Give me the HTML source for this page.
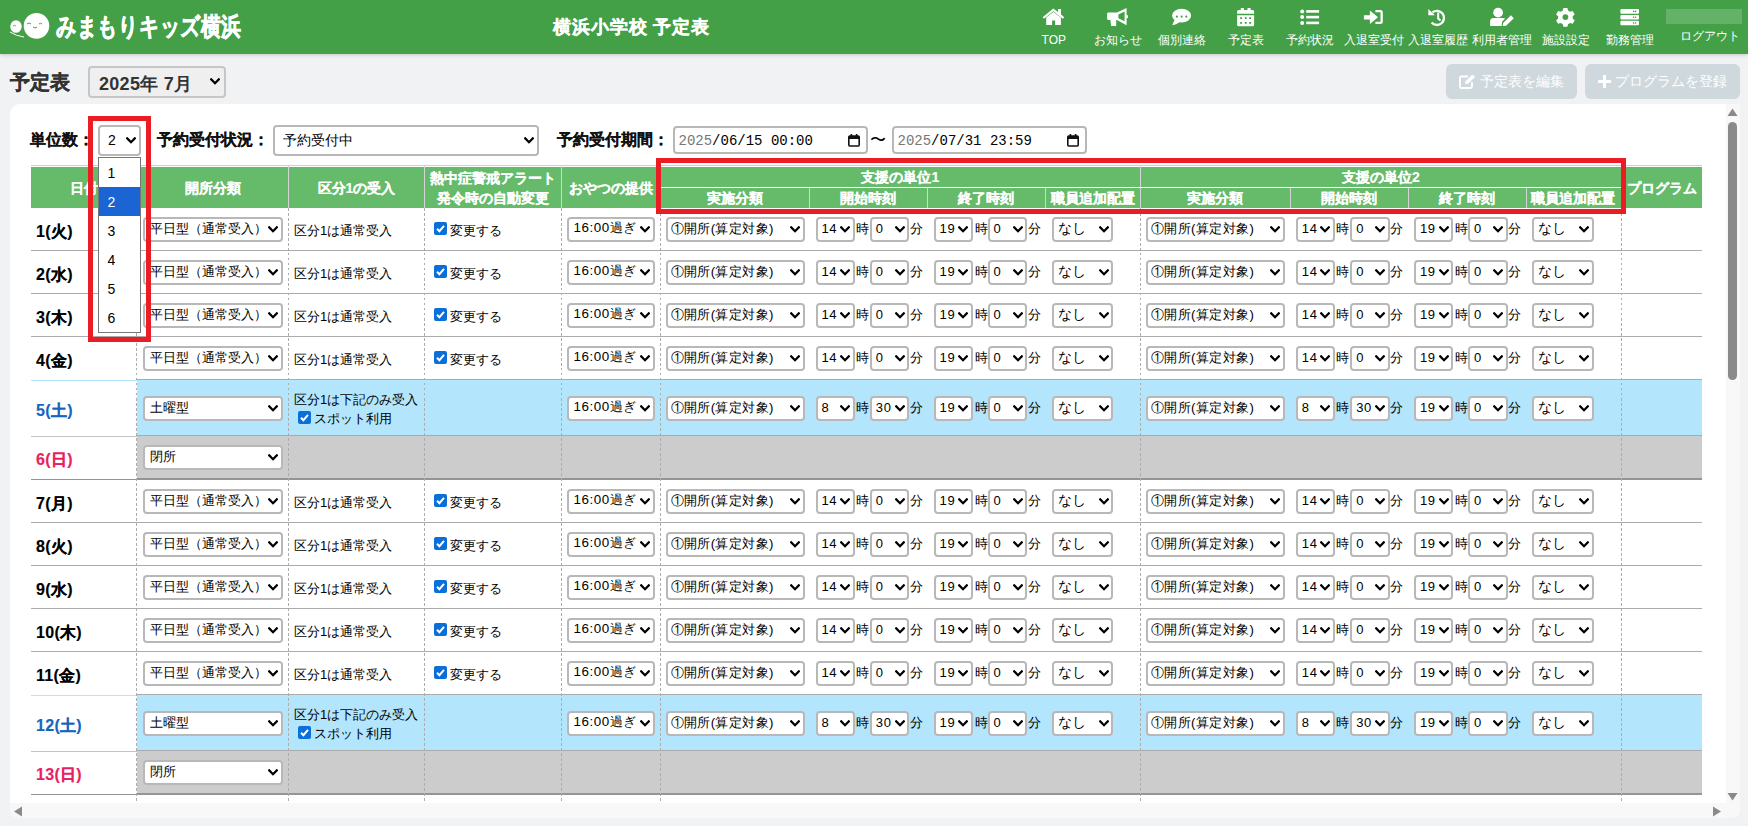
<!DOCTYPE html><html lang="ja"><head><meta charset="utf-8"><title>予定表</title><style>
html,body{margin:0;padding:0;}
body{width:1748px;height:826px;overflow:hidden;position:relative;background:#f1f2f4;font-family:'Liberation Sans', sans-serif;}
div,span,svg{position:absolute;box-sizing:content-box;}

</style></head><body>
<div style="left:0px;top:0px;width:1748px;height:54px;background:#43a047;box-shadow:0 1px 4px rgba(0,0,0,.18);"></div>
<svg style="left:8px;top:11px" width="44" height="30" viewBox="0 0 44 30"><ellipse cx="8" cy="15.5" rx="5.7" ry="6.3" fill="#fff"/><path d="M2 21 Q8 25 16 26" stroke="#fff" stroke-width="1" fill="none"/><ellipse cx="28.5" cy="14.8" rx="12.8" ry="12.9" fill="#fff"/><path d="M19 13 q2 -2 4 0 M25 16 q2 2 4 0 M31 13 q1.5 -1.5 3 0" stroke="#43a047" stroke-width="1" fill="none"/><path d="M5 15 q1.5 -1.5 3 0" stroke="#43a047" stroke-width="0.8" fill="none"/></svg>
<div style="left:55.5px;top:10px;font-size:25px;line-height:32px;color:#fff;font-weight:bold;white-space:nowrap;transform:scaleX(0.797);transform-origin:0 0;-webkit-text-stroke:0.7px #fff;">みまもりキッズ横浜</div>
<div style="left:553px;top:15px;font-size:18px;line-height:24px;color:#fff;font-weight:bold;white-space:nowrap;-webkit-text-stroke:0.3px #fff;letter-spacing:0.9px;">横浜小学校 予定表</div>
<div style="left:1013.8px;top:31.5px;width:80px;text-align:center;font-size:12px;line-height:16px;color:#fff;font-weight:normal;white-space:nowrap;">TOP</div>
<div style="left:1077.8px;top:31.5px;width:80px;text-align:center;font-size:12px;line-height:16px;color:#fff;font-weight:normal;white-space:nowrap;">お知らせ</div>
<div style="left:1141.7px;top:31.5px;width:80px;text-align:center;font-size:12px;line-height:16px;color:#fff;font-weight:normal;white-space:nowrap;">個別連絡</div>
<div style="left:1205.7px;top:31.5px;width:80px;text-align:center;font-size:12px;line-height:16px;color:#fff;font-weight:normal;white-space:nowrap;">予定表</div>
<div style="left:1269.7px;top:31.5px;width:80px;text-align:center;font-size:12px;line-height:16px;color:#fff;font-weight:normal;white-space:nowrap;">予約状況</div>
<div style="left:1333.7px;top:31.5px;width:80px;text-align:center;font-size:12px;line-height:16px;color:#fff;font-weight:normal;white-space:nowrap;">入退室受付</div>
<div style="left:1397.6px;top:31.5px;width:80px;text-align:center;font-size:12px;line-height:16px;color:#fff;font-weight:normal;white-space:nowrap;">入退室履歴</div>
<div style="left:1461.6px;top:31.5px;width:80px;text-align:center;font-size:12px;line-height:16px;color:#fff;font-weight:normal;white-space:nowrap;">利用者管理</div>
<div style="left:1525.6px;top:31.5px;width:80px;text-align:center;font-size:12px;line-height:16px;color:#fff;font-weight:normal;white-space:nowrap;">施設設定</div>
<div style="left:1589.5px;top:31.5px;width:80px;text-align:center;font-size:12px;line-height:16px;color:#fff;font-weight:normal;white-space:nowrap;">勤務管理</div>
<svg style="left:0;top:0" width="1748" height="54" viewBox="0 0 1748 54"><path d="M1053.3 8.6 L1042.6 17.2 L1044 18.8 L1053.3 11.3 L1062.8 18.8 L1064.3 17.2 L1061 14.5 V8.9 H1058 V12 Z" fill="#fff"/><path d="M1046.2 17.6 L1053.3 12 L1060.9 17.6 V25 H1055.1 V20.6 H1052.1 V25 H1046.2 Z" fill="#fff"/><path d="M1108.3 12.6 H1116.9 L1126.6 8 V25.2 L1116.9 20 H1116.2 L1116.2 26 H1111.1 L1110.4 20 H1108.3 Q1107.1 20 1107.1 18.8 V13.8 Q1107.1 12.6 1108.3 12.6 Z M1118.4 14.4 V18.3 L1124.6 21.3 V11.4 Z" fill="#fff" fill-rule="evenodd"/><rect x="1126" y="14.9" width="2" height="3.4" rx="1" fill="#fff"/><ellipse cx="1181.6" cy="15.7" rx="9.5" ry="6.9" fill="#fff"/><path d="M1174.5 20 L1172.2 25.3 Q1176.5 24.6 1179.5 22.3 Z" fill="#fff"/><circle cx="1176.9" cy="16.6" r="1.1" fill="#43a047"/><circle cx="1181.6" cy="16.6" r="1.1" fill="#43a047"/><circle cx="1186.3" cy="16.6" r="1.1" fill="#43a047"/><path d="M1238.6 10 H1252.6 Q1254.1 10 1254.1 11.5 V13.7 H1237.1 V11.5 Q1237.1 10 1238.6 10 Z" fill="#fff"/><path d="M1237.1 15.2 H1254.1 V24.8 Q1254.1 26.3 1252.6 26.3 H1238.6 Q1237.1 26.3 1237.1 24.8 Z" fill="#fff"/><rect x="1240.8" y="8" width="3.1" height="3" fill="#fff"/><rect x="1247.5" y="8" width="3.1" height="3" fill="#fff"/><g fill="#43a047"><rect x="1240.2" y="17.2" width="1.8" height="1.8"/><rect x="1244.8" y="17.2" width="1.8" height="1.8"/><rect x="1249.3" y="17.2" width="1.8" height="1.8"/><rect x="1240.2" y="22" width="1.8" height="1.8"/><rect x="1244.8" y="22" width="1.8" height="1.8"/><rect x="1249.3" y="22" width="1.8" height="1.8"/></g><circle cx="1302.2" cy="11.4" r="2" fill="#fff"/><circle cx="1302.2" cy="17.1" r="2" fill="#fff"/><circle cx="1302.2" cy="22.9" r="2" fill="#fff"/><rect x="1306.2" y="10.1" width="12.9" height="2.6" fill="#fff"/><rect x="1306.2" y="15.8" width="12.9" height="2.6" fill="#fff"/><rect x="1306.2" y="21.6" width="12.9" height="2.6" fill="#fff"/><path d="M1363.9 15.2 H1369.9 V10.6 L1378 17.3 L1369.9 24 V19.6 H1363.9 Z" fill="#fff"/><path d="M1375.4 11.15 H1380.5 Q1381.65 11.15 1381.65 12.3 V21.7 Q1381.65 22.85 1380.5 22.85 H1375.4" stroke="#fff" stroke-width="2.3" fill="none"/><path d="M1432.4 12.4 A7.1 7.1 0 1 1 1431.6 22.6" stroke="#fff" stroke-width="2.3" fill="none"/><path d="M1428.3 8.9 V15.2 H1434.9 Z" fill="#fff"/><path d="M1438.2 12.6 V18.6 L1440.5 20.6" stroke="#fff" stroke-width="2" fill="none"/><circle cx="1498.1" cy="12.6" r="4.9" fill="#fff"/><path d="M1493.6 17.9 H1502.6 Q1504.2 17.9 1505.2 18.5 L1502.2 21.5 L1501.6 26 H1490.1 V21.4 Q1490.1 17.9 1493.6 17.9 Z" fill="#fff"/><path d="M1502.6 26 L1503.2 22.9 L1510.9 15.3 L1513.8 18.2 L1506.1 25.8 Z" fill="#fff"/><path d="M1563.4 8 H1567.4 L1568 10.6 L1570.1 11.8 L1572.7 11 L1574.7 14.4 L1572.7 16.2 V18.6 L1574.7 20.4 L1572.7 23.8 L1570.1 23 L1568 24.2 L1567.4 26.8 H1563.4 L1562.8 24.2 L1560.7 23 L1558.1 23.8 L1556.1 20.4 L1558.1 18.6 V16.2 L1556.1 14.4 L1558.1 11 L1560.7 11.8 L1562.8 10.6 Z" fill="#fff"/><circle cx="1565.4" cy="17.1" r="2.9" fill="#43a047"/><rect x="1620.4" y="9.1" width="18.6" height="4.6" rx="1" fill="#fff"/><rect x="1620.4" y="15" width="18.6" height="4.4" rx="1" fill="#fff"/><rect x="1620.4" y="20.8" width="18.6" height="4.5" rx="1" fill="#fff"/><g fill="#43a047"><circle cx="1633.6" cy="11.4" r="0.8"/><circle cx="1635.6" cy="11.4" r="0.8"/><circle cx="1633.6" cy="17.2" r="0.8"/><circle cx="1635.6" cy="17.2" r="0.8"/><circle cx="1633.6" cy="23" r="0.8"/><circle cx="1635.6" cy="23" r="0.8"/></g></svg>
<div style="left:1666px;top:9px;width:76px;height:14.5px;background:rgba(255,255,255,0.18);"></div>
<div style="left:1680px;top:28px;font-size:12px;line-height:16px;color:#fff;font-weight:normal;white-space:nowrap;">ログアウト</div>
<div style="left:10px;top:69px;font-size:20px;line-height:26px;color:#333;font-weight:bold;white-space:nowrap;-webkit-text-stroke:0.3px #333;">予定表</div>
<div style="left:88px;top:66px;width:134px;height:27.5px;border:2px solid #c6c6c6;border-radius:4px;background:#efefef;"><div style="left:9px;top:3px;font-size:18px;line-height:27.5px;color:#333;font-weight:bold;white-space:nowrap;letter-spacing:0.3px;">2025年 7月</div><svg width="10" height="7" viewBox="0 0 10 7" style="position:absolute;right:4px;top:10.25px"><path d="M1.2 1.3 L5 5.2 L8.8 1.3" fill="none" stroke="#000" stroke-width="2.2" stroke-linecap="square"/></svg></div>
<div style="left:1446px;top:64px;width:131px;height:35px;background:#cfd8dc;border-radius:6px;"></div>
<div style="left:1585px;top:64px;width:155px;height:35px;background:#cfd8dc;border-radius:6px;"></div>
<svg style="left:1459px;top:73.5px" width="17" height="15" viewBox="0 0 17 15"><path d="M9 2.5 H2.5 Q1 2.5 1 4 V13 Q1 14 2.5 14 H11.5 Q13 14 13 12.5 V8" stroke="#fff" stroke-width="1.8" fill="none"/><path d="M6 10 L6.5 7.3 L13.5 0.5 L16 3 L9 9.8 Z" fill="#fff"/></svg>
<div style="left:1480px;top:72px;font-size:14px;line-height:18px;color:#fff;font-weight:normal;white-space:nowrap;">予定表を編集</div>
<svg style="left:1597.5px;top:74.5px" width="13" height="13" viewBox="0 0 13 13"><rect x="5" y="0" width="3" height="13" fill="#fff"/><rect x="0" y="5" width="13" height="3" fill="#fff"/></svg>
<div style="left:1615px;top:72px;font-size:14px;line-height:18px;color:#fff;font-weight:normal;white-space:nowrap;">プログラムを登録</div>
<div style="left:10px;top:104px;width:1730px;height:714px;background:#fff;border-radius:10px;overflow:hidden;"></div>
<div style="left:30px;top:130px;font-size:16px;line-height:20px;color:#111;font-weight:bold;white-space:nowrap;-webkit-text-stroke:0.15px #111;">単位数：</div>
<div style="left:98px;top:124.5px;width:39px;height:27.5px;border:2px solid #b8b8b8;border-radius:4px;background:#fff;"><div style="left:8px;top:0px;font-size:14px;line-height:27.5px;color:#000;font-weight:normal;white-space:nowrap;letter-spacing:0px;">2</div><svg width="10" height="7" viewBox="0 0 10 7" style="position:absolute;right:2.8px;top:10.25px"><path d="M1.2 1.3 L5 5.2 L8.8 1.3" fill="none" stroke="#000" stroke-width="2.2" stroke-linecap="square"/></svg></div>
<div style="left:157px;top:130px;font-size:16px;line-height:20px;color:#111;font-weight:bold;white-space:nowrap;-webkit-text-stroke:0.15px #111;">予約受付状況：</div>
<div style="left:272.5px;top:124.5px;width:262.5px;height:27.5px;border:2px solid #b8b8b8;border-radius:4px;background:#fff;"><div style="left:8px;top:0px;font-size:14px;line-height:27.5px;color:#000;font-weight:normal;white-space:nowrap;letter-spacing:0px;">予約受付中</div><svg width="10" height="7" viewBox="0 0 10 7" style="position:absolute;right:2.8px;top:10.25px"><path d="M1.2 1.3 L5 5.2 L8.8 1.3" fill="none" stroke="#000" stroke-width="2.2" stroke-linecap="square"/></svg></div>
<div style="left:557px;top:130px;font-size:16px;line-height:20px;color:#111;font-weight:bold;white-space:nowrap;-webkit-text-stroke:0.15px #111;">予約受付期間：</div>
<div style="left:672.5px;top:126.2px;width:191.0px;height:24.2px;border:2px solid #b8b8b8;border-radius:4px;background:#fff"><div style="left:4px;top:0.8px;font-family:'Liberation Mono',monospace;font-size:14px;line-height:24px;white-space:nowrap;color:#000"><span style="position:static;color:#777">2025</span>/06/15 00:00</div><svg style="position:absolute;right:5.5px;top:6px" width="12" height="13" viewBox="0 0 12 13"><rect x="0.8" y="2" width="10.4" height="10" rx="1" fill="none" stroke="#111" stroke-width="1.6"/><rect x="0.8" y="2" width="10.4" height="3" fill="#111"/><rect x="2.6" y="0" width="1.6" height="3" fill="#111"/><rect x="7.8" y="0" width="1.6" height="3" fill="#111"/></svg></div>
<div style="left:870px;top:130px;font-size:16px;line-height:20px;color:#000;font-weight:normal;white-space:nowrap;">〜</div>
<div style="left:891.5px;top:126.2px;width:191.0px;height:24.2px;border:2px solid #b8b8b8;border-radius:4px;background:#fff"><div style="left:4px;top:0.8px;font-family:'Liberation Mono',monospace;font-size:14px;line-height:24px;white-space:nowrap;color:#000"><span style="position:static;color:#777">2025</span>/07/31 23:59</div><svg style="position:absolute;right:5.5px;top:6px" width="12" height="13" viewBox="0 0 12 13"><rect x="0.8" y="2" width="10.4" height="10" rx="1" fill="none" stroke="#111" stroke-width="1.6"/><rect x="0.8" y="2" width="10.4" height="3" fill="#111"/><rect x="2.6" y="0" width="1.6" height="3" fill="#111"/><rect x="7.8" y="0" width="1.6" height="3" fill="#111"/></svg></div>
<div style="left:30.5px;top:165px;width:1671.1px;height:1px;background:#cfcfcf;"></div>
<div style="left:30.5px;top:167px;width:1671.1px;height:41px;background:#66bb6a;"></div>
<div style="left:136.5px;top:165px;width:1px;height:43px;background:#d4d4d4;"></div>
<div style="left:288.0px;top:165px;width:1px;height:43px;background:#d4d4d4;"></div>
<div style="left:424.0px;top:165px;width:1px;height:43px;background:#d4d4d4;"></div>
<div style="left:560.7px;top:165px;width:1px;height:43px;background:#d4d4d4;"></div>
<div style="left:659.8px;top:165px;width:1px;height:43px;background:#d4d4d4;"></div>
<div style="left:1140.1px;top:165px;width:1px;height:43px;background:#d4d4d4;"></div>
<div style="left:1620.9px;top:165px;width:1px;height:43px;background:#d4d4d4;"></div>
<div style="left:808.8px;top:188px;width:1px;height:20px;background:#d4d4d4;"></div>
<div style="left:926.9px;top:188px;width:1px;height:20px;background:#d4d4d4;"></div>
<div style="left:1044.9px;top:188px;width:1px;height:20px;background:#d4d4d4;"></div>
<div style="left:1289.7px;top:188px;width:1px;height:20px;background:#d4d4d4;"></div>
<div style="left:1408.0px;top:188px;width:1px;height:20px;background:#d4d4d4;"></div>
<div style="left:1525.8px;top:188px;width:1px;height:20px;background:#d4d4d4;"></div>
<div style="left:660.8px;top:187px;width:479.29999999999995px;height:1px;background:#fff;"></div>
<div style="left:1141.1px;top:187px;width:479.9000000000001px;height:1px;background:#fff;"></div>
<div style="left:-66.2px;top:178px;width:300px;text-align:center;font-size:14px;line-height:20px;color:#fff;font-weight:bold;white-space:nowrap;-webkit-text-stroke:0.15px #fff;">日付</div>
<div style="left:62.8px;top:178px;width:300px;text-align:center;font-size:14px;line-height:20px;color:#fff;font-weight:bold;white-space:nowrap;-webkit-text-stroke:0.15px #fff;">開所分類</div>
<div style="left:206.5px;top:178px;width:300px;text-align:center;font-size:14px;line-height:20px;color:#fff;font-weight:bold;white-space:nowrap;-webkit-text-stroke:0.15px #fff;">区分1の受入</div>
<div style="left:342.9px;top:168.5px;width:300px;text-align:center;font-size:14px;line-height:19px;color:#fff;font-weight:bold;white-space:nowrap;-webkit-text-stroke:0.15px #fff;">熱中症警戒アラート</div>
<div style="left:342.9px;top:188.5px;width:300px;text-align:center;font-size:14px;line-height:19px;color:#fff;font-weight:bold;white-space:nowrap;-webkit-text-stroke:0.15px #fff;">発令時の自動変更</div>
<div style="left:460.8px;top:178px;width:300px;text-align:center;font-size:14px;line-height:20px;color:#fff;font-weight:bold;white-space:nowrap;-webkit-text-stroke:0.15px #fff;">おやつの提供</div>
<div style="left:750.4px;top:168px;width:300px;text-align:center;font-size:14px;line-height:19px;color:#fff;font-weight:bold;white-space:nowrap;-webkit-text-stroke:0.15px #fff;">支援の単位1</div>
<div style="left:584.8px;top:189px;width:300px;text-align:center;font-size:14px;line-height:19px;color:#fff;font-weight:bold;white-space:nowrap;-webkit-text-stroke:0.15px #fff;">実施分類</div>
<div style="left:718.3px;top:189px;width:300px;text-align:center;font-size:14px;line-height:19px;color:#fff;font-weight:bold;white-space:nowrap;-webkit-text-stroke:0.15px #fff;">開始時刻</div>
<div style="left:836.4px;top:189px;width:300px;text-align:center;font-size:14px;line-height:19px;color:#fff;font-weight:bold;white-space:nowrap;-webkit-text-stroke:0.15px #fff;">終了時刻</div>
<div style="left:943.0px;top:189px;width:300px;text-align:center;font-size:14px;line-height:19px;color:#fff;font-weight:bold;white-space:nowrap;-webkit-text-stroke:0.15px #fff;">職員追加配置</div>
<div style="left:1230.8px;top:168px;width:300px;text-align:center;font-size:14px;line-height:19px;color:#fff;font-weight:bold;white-space:nowrap;-webkit-text-stroke:0.15px #fff;">支援の単位2</div>
<div style="left:1065.1px;top:189px;width:300px;text-align:center;font-size:14px;line-height:19px;color:#fff;font-weight:bold;white-space:nowrap;-webkit-text-stroke:0.15px #fff;">実施分類</div>
<div style="left:1198.8px;top:189px;width:300px;text-align:center;font-size:14px;line-height:19px;color:#fff;font-weight:bold;white-space:nowrap;-webkit-text-stroke:0.15px #fff;">開始時刻</div>
<div style="left:1316.8px;top:189px;width:300px;text-align:center;font-size:14px;line-height:19px;color:#fff;font-weight:bold;white-space:nowrap;-webkit-text-stroke:0.15px #fff;">終了時刻</div>
<div style="left:1423.3px;top:189px;width:300px;text-align:center;font-size:14px;line-height:19px;color:#fff;font-weight:bold;white-space:nowrap;-webkit-text-stroke:0.15px #fff;">職員追加配置</div>
<div style="left:1511.5px;top:178px;width:300px;text-align:center;font-size:14px;line-height:20px;color:#fff;font-weight:bold;white-space:nowrap;-webkit-text-stroke:0.15px #fff;">プログラム</div>
<div style="left:137px;top:250px;width:1564.6px;height:1px;background:#ababab;"></div>
<div style="left:30.5px;top:250px;width:106.5px;height:1px;background:#ababab;"></div>
<div style="left:36px;top:220.5px;font-size:16px;line-height:22px;color:#000;font-weight:bold;white-space:nowrap;-webkit-text-stroke:0.15px #000;letter-spacing:0.3px;">1(火)</div>
<div style="left:142.5px;top:216.5px;width:136.0px;height:21.0px;border:2px solid #b8b8b8;border-radius:4px;background:#fff;"><div style="left:5px;top:-0.5px;font-size:13px;line-height:21.0px;color:#000;font-weight:normal;white-space:nowrap;letter-spacing:0px;">平日型（通常受入）</div><svg width="10" height="7" viewBox="0 0 10 7" style="position:absolute;right:2.8px;top:7.0px"><path d="M1.2 1.3 L5 5.2 L8.8 1.3" fill="none" stroke="#000" stroke-width="2.2" stroke-linecap="square"/></svg></div>
<div style="left:294px;top:221.5px;font-size:13px;line-height:18px;color:#000;font-weight:normal;white-space:nowrap;">区分1は通常受入</div>
<svg style="left:434px;top:222.0px" width="13" height="13" viewBox="0 0 13 13"><rect x="0" y="0" width="13" height="13" rx="2" fill="#0b6fd9"/><path d="M3 6.7 L5.4 9.2 L10 3.8" stroke="#fff" stroke-width="2" fill="none"/></svg>
<div style="left:449.5px;top:221.5px;font-size:13px;line-height:18px;color:#000;font-weight:normal;white-space:nowrap;">変更する</div>
<div style="left:567.4px;top:216.5px;width:83.20000000000005px;height:21.0px;border:2px solid #b8b8b8;border-radius:4px;background:#fff;"><div style="left:4px;top:-1.5px;font-size:13.4px;line-height:21.0px;color:#000;font-weight:normal;white-space:nowrap;letter-spacing:0.55px;">16:00過ぎ</div><svg width="10" height="7" viewBox="0 0 10 7" style="position:absolute;right:2.8px;top:7.0px"><path d="M1.2 1.3 L5 5.2 L8.8 1.3" fill="none" stroke="#000" stroke-width="2.2" stroke-linecap="square"/></svg></div>
<div style="left:666px;top:216.5px;width:134.70000000000005px;height:21.0px;border:2px solid #b8b8b8;border-radius:4px;background:#fff;"><div style="left:2.5px;top:-1px;font-size:13.2px;line-height:21.0px;color:#000;font-weight:normal;white-space:nowrap;letter-spacing:0.4px;">①開所(算定対象)</div><svg width="10" height="7" viewBox="0 0 10 7" style="position:absolute;right:2.8px;top:7.0px"><path d="M1.2 1.3 L5 5.2 L8.8 1.3" fill="none" stroke="#000" stroke-width="2.2" stroke-linecap="square"/></svg></div>
<div style="left:815.6px;top:216.5px;width:35.0px;height:21.0px;border:2px solid #b8b8b8;border-radius:4px;background:#fff;"><div style="left:3.8px;top:-0.8px;font-size:13px;line-height:21.0px;color:#000;font-weight:normal;white-space:nowrap;letter-spacing:0.7px;">14</div><svg width="10" height="7" viewBox="0 0 10 7" style="position:absolute;right:2.6px;top:7.0px"><path d="M1.2 1.3 L5 5.2 L8.8 1.3" fill="none" stroke="#000" stroke-width="2.2" stroke-linecap="square"/></svg></div>
<div style="left:856px;top:219.5px;font-size:13px;line-height:18px;color:#000;font-weight:normal;white-space:nowrap;">時</div>
<div style="left:870px;top:216.5px;width:35.200000000000045px;height:21.0px;border:2px solid #b8b8b8;border-radius:4px;background:#fff;"><div style="left:3.8px;top:-0.8px;font-size:13px;line-height:21.0px;color:#000;font-weight:normal;white-space:nowrap;letter-spacing:0.7px;">0</div><svg width="10" height="7" viewBox="0 0 10 7" style="position:absolute;right:2.6px;top:7.0px"><path d="M1.2 1.3 L5 5.2 L8.8 1.3" fill="none" stroke="#000" stroke-width="2.2" stroke-linecap="square"/></svg></div>
<div style="left:909.5px;top:219.5px;font-size:13px;line-height:18px;color:#000;font-weight:normal;white-space:nowrap;">分</div>
<div style="left:933.7px;top:216.5px;width:35.39999999999998px;height:21.0px;border:2px solid #b8b8b8;border-radius:4px;background:#fff;"><div style="left:3.8px;top:-0.8px;font-size:13px;line-height:21.0px;color:#000;font-weight:normal;white-space:nowrap;letter-spacing:0.7px;">19</div><svg width="10" height="7" viewBox="0 0 10 7" style="position:absolute;right:2.6px;top:7.0px"><path d="M1.2 1.3 L5 5.2 L8.8 1.3" fill="none" stroke="#000" stroke-width="2.2" stroke-linecap="square"/></svg></div>
<div style="left:974.5px;top:219.5px;font-size:13px;line-height:18px;color:#000;font-weight:normal;white-space:nowrap;">時</div>
<div style="left:987.8px;top:216.5px;width:35.40000000000009px;height:21.0px;border:2px solid #b8b8b8;border-radius:4px;background:#fff;"><div style="left:3.8px;top:-0.8px;font-size:13px;line-height:21.0px;color:#000;font-weight:normal;white-space:nowrap;letter-spacing:0.7px;">0</div><svg width="10" height="7" viewBox="0 0 10 7" style="position:absolute;right:2.6px;top:7.0px"><path d="M1.2 1.3 L5 5.2 L8.8 1.3" fill="none" stroke="#000" stroke-width="2.2" stroke-linecap="square"/></svg></div>
<div style="left:1027.8px;top:219.5px;font-size:13px;line-height:18px;color:#000;font-weight:normal;white-space:nowrap;">分</div>
<div style="left:1051.5px;top:216.5px;width:57.90000000000009px;height:21.0px;border:2px solid #b8b8b8;border-radius:4px;background:#fff;"><div style="left:4.5px;top:-1px;font-size:13.5px;line-height:21.0px;color:#000;font-weight:normal;white-space:nowrap;letter-spacing:0px;">なし</div><svg width="10" height="7" viewBox="0 0 10 7" style="position:absolute;right:2.8px;top:7.0px"><path d="M1.2 1.3 L5 5.2 L8.8 1.3" fill="none" stroke="#000" stroke-width="2.2" stroke-linecap="square"/></svg></div>
<div style="left:1146.4px;top:216.5px;width:134.69999999999982px;height:21.0px;border:2px solid #b8b8b8;border-radius:4px;background:#fff;"><div style="left:2.5px;top:-1px;font-size:13.2px;line-height:21.0px;color:#000;font-weight:normal;white-space:nowrap;letter-spacing:0.4px;">①開所(算定対象)</div><svg width="10" height="7" viewBox="0 0 10 7" style="position:absolute;right:2.8px;top:7.0px"><path d="M1.2 1.3 L5 5.2 L8.8 1.3" fill="none" stroke="#000" stroke-width="2.2" stroke-linecap="square"/></svg></div>
<div style="left:1296.0px;top:216.5px;width:35.0px;height:21.0px;border:2px solid #b8b8b8;border-radius:4px;background:#fff;"><div style="left:3.8px;top:-0.8px;font-size:13px;line-height:21.0px;color:#000;font-weight:normal;white-space:nowrap;letter-spacing:0.7px;">14</div><svg width="10" height="7" viewBox="0 0 10 7" style="position:absolute;right:2.6px;top:7.0px"><path d="M1.2 1.3 L5 5.2 L8.8 1.3" fill="none" stroke="#000" stroke-width="2.2" stroke-linecap="square"/></svg></div>
<div style="left:1336.4px;top:219.5px;font-size:13px;line-height:18px;color:#000;font-weight:normal;white-space:nowrap;">時</div>
<div style="left:1350.4px;top:216.5px;width:35.19999999999982px;height:21.0px;border:2px solid #b8b8b8;border-radius:4px;background:#fff;"><div style="left:3.8px;top:-0.8px;font-size:13px;line-height:21.0px;color:#000;font-weight:normal;white-space:nowrap;letter-spacing:0.7px;">0</div><svg width="10" height="7" viewBox="0 0 10 7" style="position:absolute;right:2.6px;top:7.0px"><path d="M1.2 1.3 L5 5.2 L8.8 1.3" fill="none" stroke="#000" stroke-width="2.2" stroke-linecap="square"/></svg></div>
<div style="left:1389.9px;top:219.5px;font-size:13px;line-height:18px;color:#000;font-weight:normal;white-space:nowrap;">分</div>
<div style="left:1414.1px;top:216.5px;width:35.40000000000009px;height:21.0px;border:2px solid #b8b8b8;border-radius:4px;background:#fff;"><div style="left:3.8px;top:-0.8px;font-size:13px;line-height:21.0px;color:#000;font-weight:normal;white-space:nowrap;letter-spacing:0.7px;">19</div><svg width="10" height="7" viewBox="0 0 10 7" style="position:absolute;right:2.6px;top:7.0px"><path d="M1.2 1.3 L5 5.2 L8.8 1.3" fill="none" stroke="#000" stroke-width="2.2" stroke-linecap="square"/></svg></div>
<div style="left:1454.9px;top:219.5px;font-size:13px;line-height:18px;color:#000;font-weight:normal;white-space:nowrap;">時</div>
<div style="left:1468.1999999999998px;top:216.5px;width:35.40000000000009px;height:21.0px;border:2px solid #b8b8b8;border-radius:4px;background:#fff;"><div style="left:3.8px;top:-0.8px;font-size:13px;line-height:21.0px;color:#000;font-weight:normal;white-space:nowrap;letter-spacing:0.7px;">0</div><svg width="10" height="7" viewBox="0 0 10 7" style="position:absolute;right:2.6px;top:7.0px"><path d="M1.2 1.3 L5 5.2 L8.8 1.3" fill="none" stroke="#000" stroke-width="2.2" stroke-linecap="square"/></svg></div>
<div style="left:1508.1999999999998px;top:219.5px;font-size:13px;line-height:18px;color:#000;font-weight:normal;white-space:nowrap;">分</div>
<div style="left:1531.9px;top:216.5px;width:57.90000000000009px;height:21.0px;border:2px solid #b8b8b8;border-radius:4px;background:#fff;"><div style="left:4.5px;top:-1px;font-size:13.5px;line-height:21.0px;color:#000;font-weight:normal;white-space:nowrap;letter-spacing:0px;">なし</div><svg width="10" height="7" viewBox="0 0 10 7" style="position:absolute;right:2.8px;top:7.0px"><path d="M1.2 1.3 L5 5.2 L8.8 1.3" fill="none" stroke="#000" stroke-width="2.2" stroke-linecap="square"/></svg></div>
<div style="left:137px;top:293px;width:1564.6px;height:1px;background:#ababab;"></div>
<div style="left:30.5px;top:293px;width:106.5px;height:1px;background:#ababab;"></div>
<div style="left:36px;top:263.5px;font-size:16px;line-height:22px;color:#000;font-weight:bold;white-space:nowrap;-webkit-text-stroke:0.15px #000;letter-spacing:0.3px;">2(水)</div>
<div style="left:142.5px;top:259.5px;width:136.0px;height:21.0px;border:2px solid #b8b8b8;border-radius:4px;background:#fff;"><div style="left:5px;top:-0.5px;font-size:13px;line-height:21.0px;color:#000;font-weight:normal;white-space:nowrap;letter-spacing:0px;">平日型（通常受入）</div><svg width="10" height="7" viewBox="0 0 10 7" style="position:absolute;right:2.8px;top:7.0px"><path d="M1.2 1.3 L5 5.2 L8.8 1.3" fill="none" stroke="#000" stroke-width="2.2" stroke-linecap="square"/></svg></div>
<div style="left:294px;top:264.5px;font-size:13px;line-height:18px;color:#000;font-weight:normal;white-space:nowrap;">区分1は通常受入</div>
<svg style="left:434px;top:265.0px" width="13" height="13" viewBox="0 0 13 13"><rect x="0" y="0" width="13" height="13" rx="2" fill="#0b6fd9"/><path d="M3 6.7 L5.4 9.2 L10 3.8" stroke="#fff" stroke-width="2" fill="none"/></svg>
<div style="left:449.5px;top:264.5px;font-size:13px;line-height:18px;color:#000;font-weight:normal;white-space:nowrap;">変更する</div>
<div style="left:567.4px;top:259.5px;width:83.20000000000005px;height:21.0px;border:2px solid #b8b8b8;border-radius:4px;background:#fff;"><div style="left:4px;top:-1.5px;font-size:13.4px;line-height:21.0px;color:#000;font-weight:normal;white-space:nowrap;letter-spacing:0.55px;">16:00過ぎ</div><svg width="10" height="7" viewBox="0 0 10 7" style="position:absolute;right:2.8px;top:7.0px"><path d="M1.2 1.3 L5 5.2 L8.8 1.3" fill="none" stroke="#000" stroke-width="2.2" stroke-linecap="square"/></svg></div>
<div style="left:666px;top:259.5px;width:134.70000000000005px;height:21.0px;border:2px solid #b8b8b8;border-radius:4px;background:#fff;"><div style="left:2.5px;top:-1px;font-size:13.2px;line-height:21.0px;color:#000;font-weight:normal;white-space:nowrap;letter-spacing:0.4px;">①開所(算定対象)</div><svg width="10" height="7" viewBox="0 0 10 7" style="position:absolute;right:2.8px;top:7.0px"><path d="M1.2 1.3 L5 5.2 L8.8 1.3" fill="none" stroke="#000" stroke-width="2.2" stroke-linecap="square"/></svg></div>
<div style="left:815.6px;top:259.5px;width:35.0px;height:21.0px;border:2px solid #b8b8b8;border-radius:4px;background:#fff;"><div style="left:3.8px;top:-0.8px;font-size:13px;line-height:21.0px;color:#000;font-weight:normal;white-space:nowrap;letter-spacing:0.7px;">14</div><svg width="10" height="7" viewBox="0 0 10 7" style="position:absolute;right:2.6px;top:7.0px"><path d="M1.2 1.3 L5 5.2 L8.8 1.3" fill="none" stroke="#000" stroke-width="2.2" stroke-linecap="square"/></svg></div>
<div style="left:856px;top:262.5px;font-size:13px;line-height:18px;color:#000;font-weight:normal;white-space:nowrap;">時</div>
<div style="left:870px;top:259.5px;width:35.200000000000045px;height:21.0px;border:2px solid #b8b8b8;border-radius:4px;background:#fff;"><div style="left:3.8px;top:-0.8px;font-size:13px;line-height:21.0px;color:#000;font-weight:normal;white-space:nowrap;letter-spacing:0.7px;">0</div><svg width="10" height="7" viewBox="0 0 10 7" style="position:absolute;right:2.6px;top:7.0px"><path d="M1.2 1.3 L5 5.2 L8.8 1.3" fill="none" stroke="#000" stroke-width="2.2" stroke-linecap="square"/></svg></div>
<div style="left:909.5px;top:262.5px;font-size:13px;line-height:18px;color:#000;font-weight:normal;white-space:nowrap;">分</div>
<div style="left:933.7px;top:259.5px;width:35.39999999999998px;height:21.0px;border:2px solid #b8b8b8;border-radius:4px;background:#fff;"><div style="left:3.8px;top:-0.8px;font-size:13px;line-height:21.0px;color:#000;font-weight:normal;white-space:nowrap;letter-spacing:0.7px;">19</div><svg width="10" height="7" viewBox="0 0 10 7" style="position:absolute;right:2.6px;top:7.0px"><path d="M1.2 1.3 L5 5.2 L8.8 1.3" fill="none" stroke="#000" stroke-width="2.2" stroke-linecap="square"/></svg></div>
<div style="left:974.5px;top:262.5px;font-size:13px;line-height:18px;color:#000;font-weight:normal;white-space:nowrap;">時</div>
<div style="left:987.8px;top:259.5px;width:35.40000000000009px;height:21.0px;border:2px solid #b8b8b8;border-radius:4px;background:#fff;"><div style="left:3.8px;top:-0.8px;font-size:13px;line-height:21.0px;color:#000;font-weight:normal;white-space:nowrap;letter-spacing:0.7px;">0</div><svg width="10" height="7" viewBox="0 0 10 7" style="position:absolute;right:2.6px;top:7.0px"><path d="M1.2 1.3 L5 5.2 L8.8 1.3" fill="none" stroke="#000" stroke-width="2.2" stroke-linecap="square"/></svg></div>
<div style="left:1027.8px;top:262.5px;font-size:13px;line-height:18px;color:#000;font-weight:normal;white-space:nowrap;">分</div>
<div style="left:1051.5px;top:259.5px;width:57.90000000000009px;height:21.0px;border:2px solid #b8b8b8;border-radius:4px;background:#fff;"><div style="left:4.5px;top:-1px;font-size:13.5px;line-height:21.0px;color:#000;font-weight:normal;white-space:nowrap;letter-spacing:0px;">なし</div><svg width="10" height="7" viewBox="0 0 10 7" style="position:absolute;right:2.8px;top:7.0px"><path d="M1.2 1.3 L5 5.2 L8.8 1.3" fill="none" stroke="#000" stroke-width="2.2" stroke-linecap="square"/></svg></div>
<div style="left:1146.4px;top:259.5px;width:134.69999999999982px;height:21.0px;border:2px solid #b8b8b8;border-radius:4px;background:#fff;"><div style="left:2.5px;top:-1px;font-size:13.2px;line-height:21.0px;color:#000;font-weight:normal;white-space:nowrap;letter-spacing:0.4px;">①開所(算定対象)</div><svg width="10" height="7" viewBox="0 0 10 7" style="position:absolute;right:2.8px;top:7.0px"><path d="M1.2 1.3 L5 5.2 L8.8 1.3" fill="none" stroke="#000" stroke-width="2.2" stroke-linecap="square"/></svg></div>
<div style="left:1296.0px;top:259.5px;width:35.0px;height:21.0px;border:2px solid #b8b8b8;border-radius:4px;background:#fff;"><div style="left:3.8px;top:-0.8px;font-size:13px;line-height:21.0px;color:#000;font-weight:normal;white-space:nowrap;letter-spacing:0.7px;">14</div><svg width="10" height="7" viewBox="0 0 10 7" style="position:absolute;right:2.6px;top:7.0px"><path d="M1.2 1.3 L5 5.2 L8.8 1.3" fill="none" stroke="#000" stroke-width="2.2" stroke-linecap="square"/></svg></div>
<div style="left:1336.4px;top:262.5px;font-size:13px;line-height:18px;color:#000;font-weight:normal;white-space:nowrap;">時</div>
<div style="left:1350.4px;top:259.5px;width:35.19999999999982px;height:21.0px;border:2px solid #b8b8b8;border-radius:4px;background:#fff;"><div style="left:3.8px;top:-0.8px;font-size:13px;line-height:21.0px;color:#000;font-weight:normal;white-space:nowrap;letter-spacing:0.7px;">0</div><svg width="10" height="7" viewBox="0 0 10 7" style="position:absolute;right:2.6px;top:7.0px"><path d="M1.2 1.3 L5 5.2 L8.8 1.3" fill="none" stroke="#000" stroke-width="2.2" stroke-linecap="square"/></svg></div>
<div style="left:1389.9px;top:262.5px;font-size:13px;line-height:18px;color:#000;font-weight:normal;white-space:nowrap;">分</div>
<div style="left:1414.1px;top:259.5px;width:35.40000000000009px;height:21.0px;border:2px solid #b8b8b8;border-radius:4px;background:#fff;"><div style="left:3.8px;top:-0.8px;font-size:13px;line-height:21.0px;color:#000;font-weight:normal;white-space:nowrap;letter-spacing:0.7px;">19</div><svg width="10" height="7" viewBox="0 0 10 7" style="position:absolute;right:2.6px;top:7.0px"><path d="M1.2 1.3 L5 5.2 L8.8 1.3" fill="none" stroke="#000" stroke-width="2.2" stroke-linecap="square"/></svg></div>
<div style="left:1454.9px;top:262.5px;font-size:13px;line-height:18px;color:#000;font-weight:normal;white-space:nowrap;">時</div>
<div style="left:1468.1999999999998px;top:259.5px;width:35.40000000000009px;height:21.0px;border:2px solid #b8b8b8;border-radius:4px;background:#fff;"><div style="left:3.8px;top:-0.8px;font-size:13px;line-height:21.0px;color:#000;font-weight:normal;white-space:nowrap;letter-spacing:0.7px;">0</div><svg width="10" height="7" viewBox="0 0 10 7" style="position:absolute;right:2.6px;top:7.0px"><path d="M1.2 1.3 L5 5.2 L8.8 1.3" fill="none" stroke="#000" stroke-width="2.2" stroke-linecap="square"/></svg></div>
<div style="left:1508.1999999999998px;top:262.5px;font-size:13px;line-height:18px;color:#000;font-weight:normal;white-space:nowrap;">分</div>
<div style="left:1531.9px;top:259.5px;width:57.90000000000009px;height:21.0px;border:2px solid #b8b8b8;border-radius:4px;background:#fff;"><div style="left:4.5px;top:-1px;font-size:13.5px;line-height:21.0px;color:#000;font-weight:normal;white-space:nowrap;letter-spacing:0px;">なし</div><svg width="10" height="7" viewBox="0 0 10 7" style="position:absolute;right:2.8px;top:7.0px"><path d="M1.2 1.3 L5 5.2 L8.8 1.3" fill="none" stroke="#000" stroke-width="2.2" stroke-linecap="square"/></svg></div>
<div style="left:137px;top:336px;width:1564.6px;height:1px;background:#ababab;"></div>
<div style="left:30.5px;top:336px;width:106.5px;height:1px;background:#ababab;"></div>
<div style="left:36px;top:306.5px;font-size:16px;line-height:22px;color:#000;font-weight:bold;white-space:nowrap;-webkit-text-stroke:0.15px #000;letter-spacing:0.3px;">3(木)</div>
<div style="left:142.5px;top:302.5px;width:136.0px;height:21.0px;border:2px solid #b8b8b8;border-radius:4px;background:#fff;"><div style="left:5px;top:-0.5px;font-size:13px;line-height:21.0px;color:#000;font-weight:normal;white-space:nowrap;letter-spacing:0px;">平日型（通常受入）</div><svg width="10" height="7" viewBox="0 0 10 7" style="position:absolute;right:2.8px;top:7.0px"><path d="M1.2 1.3 L5 5.2 L8.8 1.3" fill="none" stroke="#000" stroke-width="2.2" stroke-linecap="square"/></svg></div>
<div style="left:294px;top:307.5px;font-size:13px;line-height:18px;color:#000;font-weight:normal;white-space:nowrap;">区分1は通常受入</div>
<svg style="left:434px;top:308.0px" width="13" height="13" viewBox="0 0 13 13"><rect x="0" y="0" width="13" height="13" rx="2" fill="#0b6fd9"/><path d="M3 6.7 L5.4 9.2 L10 3.8" stroke="#fff" stroke-width="2" fill="none"/></svg>
<div style="left:449.5px;top:307.5px;font-size:13px;line-height:18px;color:#000;font-weight:normal;white-space:nowrap;">変更する</div>
<div style="left:567.4px;top:302.5px;width:83.20000000000005px;height:21.0px;border:2px solid #b8b8b8;border-radius:4px;background:#fff;"><div style="left:4px;top:-1.5px;font-size:13.4px;line-height:21.0px;color:#000;font-weight:normal;white-space:nowrap;letter-spacing:0.55px;">16:00過ぎ</div><svg width="10" height="7" viewBox="0 0 10 7" style="position:absolute;right:2.8px;top:7.0px"><path d="M1.2 1.3 L5 5.2 L8.8 1.3" fill="none" stroke="#000" stroke-width="2.2" stroke-linecap="square"/></svg></div>
<div style="left:666px;top:302.5px;width:134.70000000000005px;height:21.0px;border:2px solid #b8b8b8;border-radius:4px;background:#fff;"><div style="left:2.5px;top:-1px;font-size:13.2px;line-height:21.0px;color:#000;font-weight:normal;white-space:nowrap;letter-spacing:0.4px;">①開所(算定対象)</div><svg width="10" height="7" viewBox="0 0 10 7" style="position:absolute;right:2.8px;top:7.0px"><path d="M1.2 1.3 L5 5.2 L8.8 1.3" fill="none" stroke="#000" stroke-width="2.2" stroke-linecap="square"/></svg></div>
<div style="left:815.6px;top:302.5px;width:35.0px;height:21.0px;border:2px solid #b8b8b8;border-radius:4px;background:#fff;"><div style="left:3.8px;top:-0.8px;font-size:13px;line-height:21.0px;color:#000;font-weight:normal;white-space:nowrap;letter-spacing:0.7px;">14</div><svg width="10" height="7" viewBox="0 0 10 7" style="position:absolute;right:2.6px;top:7.0px"><path d="M1.2 1.3 L5 5.2 L8.8 1.3" fill="none" stroke="#000" stroke-width="2.2" stroke-linecap="square"/></svg></div>
<div style="left:856px;top:305.5px;font-size:13px;line-height:18px;color:#000;font-weight:normal;white-space:nowrap;">時</div>
<div style="left:870px;top:302.5px;width:35.200000000000045px;height:21.0px;border:2px solid #b8b8b8;border-radius:4px;background:#fff;"><div style="left:3.8px;top:-0.8px;font-size:13px;line-height:21.0px;color:#000;font-weight:normal;white-space:nowrap;letter-spacing:0.7px;">0</div><svg width="10" height="7" viewBox="0 0 10 7" style="position:absolute;right:2.6px;top:7.0px"><path d="M1.2 1.3 L5 5.2 L8.8 1.3" fill="none" stroke="#000" stroke-width="2.2" stroke-linecap="square"/></svg></div>
<div style="left:909.5px;top:305.5px;font-size:13px;line-height:18px;color:#000;font-weight:normal;white-space:nowrap;">分</div>
<div style="left:933.7px;top:302.5px;width:35.39999999999998px;height:21.0px;border:2px solid #b8b8b8;border-radius:4px;background:#fff;"><div style="left:3.8px;top:-0.8px;font-size:13px;line-height:21.0px;color:#000;font-weight:normal;white-space:nowrap;letter-spacing:0.7px;">19</div><svg width="10" height="7" viewBox="0 0 10 7" style="position:absolute;right:2.6px;top:7.0px"><path d="M1.2 1.3 L5 5.2 L8.8 1.3" fill="none" stroke="#000" stroke-width="2.2" stroke-linecap="square"/></svg></div>
<div style="left:974.5px;top:305.5px;font-size:13px;line-height:18px;color:#000;font-weight:normal;white-space:nowrap;">時</div>
<div style="left:987.8px;top:302.5px;width:35.40000000000009px;height:21.0px;border:2px solid #b8b8b8;border-radius:4px;background:#fff;"><div style="left:3.8px;top:-0.8px;font-size:13px;line-height:21.0px;color:#000;font-weight:normal;white-space:nowrap;letter-spacing:0.7px;">0</div><svg width="10" height="7" viewBox="0 0 10 7" style="position:absolute;right:2.6px;top:7.0px"><path d="M1.2 1.3 L5 5.2 L8.8 1.3" fill="none" stroke="#000" stroke-width="2.2" stroke-linecap="square"/></svg></div>
<div style="left:1027.8px;top:305.5px;font-size:13px;line-height:18px;color:#000;font-weight:normal;white-space:nowrap;">分</div>
<div style="left:1051.5px;top:302.5px;width:57.90000000000009px;height:21.0px;border:2px solid #b8b8b8;border-radius:4px;background:#fff;"><div style="left:4.5px;top:-1px;font-size:13.5px;line-height:21.0px;color:#000;font-weight:normal;white-space:nowrap;letter-spacing:0px;">なし</div><svg width="10" height="7" viewBox="0 0 10 7" style="position:absolute;right:2.8px;top:7.0px"><path d="M1.2 1.3 L5 5.2 L8.8 1.3" fill="none" stroke="#000" stroke-width="2.2" stroke-linecap="square"/></svg></div>
<div style="left:1146.4px;top:302.5px;width:134.69999999999982px;height:21.0px;border:2px solid #b8b8b8;border-radius:4px;background:#fff;"><div style="left:2.5px;top:-1px;font-size:13.2px;line-height:21.0px;color:#000;font-weight:normal;white-space:nowrap;letter-spacing:0.4px;">①開所(算定対象)</div><svg width="10" height="7" viewBox="0 0 10 7" style="position:absolute;right:2.8px;top:7.0px"><path d="M1.2 1.3 L5 5.2 L8.8 1.3" fill="none" stroke="#000" stroke-width="2.2" stroke-linecap="square"/></svg></div>
<div style="left:1296.0px;top:302.5px;width:35.0px;height:21.0px;border:2px solid #b8b8b8;border-radius:4px;background:#fff;"><div style="left:3.8px;top:-0.8px;font-size:13px;line-height:21.0px;color:#000;font-weight:normal;white-space:nowrap;letter-spacing:0.7px;">14</div><svg width="10" height="7" viewBox="0 0 10 7" style="position:absolute;right:2.6px;top:7.0px"><path d="M1.2 1.3 L5 5.2 L8.8 1.3" fill="none" stroke="#000" stroke-width="2.2" stroke-linecap="square"/></svg></div>
<div style="left:1336.4px;top:305.5px;font-size:13px;line-height:18px;color:#000;font-weight:normal;white-space:nowrap;">時</div>
<div style="left:1350.4px;top:302.5px;width:35.19999999999982px;height:21.0px;border:2px solid #b8b8b8;border-radius:4px;background:#fff;"><div style="left:3.8px;top:-0.8px;font-size:13px;line-height:21.0px;color:#000;font-weight:normal;white-space:nowrap;letter-spacing:0.7px;">0</div><svg width="10" height="7" viewBox="0 0 10 7" style="position:absolute;right:2.6px;top:7.0px"><path d="M1.2 1.3 L5 5.2 L8.8 1.3" fill="none" stroke="#000" stroke-width="2.2" stroke-linecap="square"/></svg></div>
<div style="left:1389.9px;top:305.5px;font-size:13px;line-height:18px;color:#000;font-weight:normal;white-space:nowrap;">分</div>
<div style="left:1414.1px;top:302.5px;width:35.40000000000009px;height:21.0px;border:2px solid #b8b8b8;border-radius:4px;background:#fff;"><div style="left:3.8px;top:-0.8px;font-size:13px;line-height:21.0px;color:#000;font-weight:normal;white-space:nowrap;letter-spacing:0.7px;">19</div><svg width="10" height="7" viewBox="0 0 10 7" style="position:absolute;right:2.6px;top:7.0px"><path d="M1.2 1.3 L5 5.2 L8.8 1.3" fill="none" stroke="#000" stroke-width="2.2" stroke-linecap="square"/></svg></div>
<div style="left:1454.9px;top:305.5px;font-size:13px;line-height:18px;color:#000;font-weight:normal;white-space:nowrap;">時</div>
<div style="left:1468.1999999999998px;top:302.5px;width:35.40000000000009px;height:21.0px;border:2px solid #b8b8b8;border-radius:4px;background:#fff;"><div style="left:3.8px;top:-0.8px;font-size:13px;line-height:21.0px;color:#000;font-weight:normal;white-space:nowrap;letter-spacing:0.7px;">0</div><svg width="10" height="7" viewBox="0 0 10 7" style="position:absolute;right:2.6px;top:7.0px"><path d="M1.2 1.3 L5 5.2 L8.8 1.3" fill="none" stroke="#000" stroke-width="2.2" stroke-linecap="square"/></svg></div>
<div style="left:1508.1999999999998px;top:305.5px;font-size:13px;line-height:18px;color:#000;font-weight:normal;white-space:nowrap;">分</div>
<div style="left:1531.9px;top:302.5px;width:57.90000000000009px;height:21.0px;border:2px solid #b8b8b8;border-radius:4px;background:#fff;"><div style="left:4.5px;top:-1px;font-size:13.5px;line-height:21.0px;color:#000;font-weight:normal;white-space:nowrap;letter-spacing:0px;">なし</div><svg width="10" height="7" viewBox="0 0 10 7" style="position:absolute;right:2.8px;top:7.0px"><path d="M1.2 1.3 L5 5.2 L8.8 1.3" fill="none" stroke="#000" stroke-width="2.2" stroke-linecap="square"/></svg></div>
<div style="left:137px;top:379px;width:1564.6px;height:1px;background:#ababab;"></div>
<div style="left:30.5px;top:380px;width:106.5px;height:1px;background:#b3e5fc;"></div>
<div style="left:36px;top:349.5px;font-size:16px;line-height:22px;color:#000;font-weight:bold;white-space:nowrap;-webkit-text-stroke:0.15px #000;letter-spacing:0.3px;">4(金)</div>
<div style="left:142.5px;top:345.5px;width:136.0px;height:21.0px;border:2px solid #b8b8b8;border-radius:4px;background:#fff;"><div style="left:5px;top:-0.5px;font-size:13px;line-height:21.0px;color:#000;font-weight:normal;white-space:nowrap;letter-spacing:0px;">平日型（通常受入）</div><svg width="10" height="7" viewBox="0 0 10 7" style="position:absolute;right:2.8px;top:7.0px"><path d="M1.2 1.3 L5 5.2 L8.8 1.3" fill="none" stroke="#000" stroke-width="2.2" stroke-linecap="square"/></svg></div>
<div style="left:294px;top:350.5px;font-size:13px;line-height:18px;color:#000;font-weight:normal;white-space:nowrap;">区分1は通常受入</div>
<svg style="left:434px;top:351.0px" width="13" height="13" viewBox="0 0 13 13"><rect x="0" y="0" width="13" height="13" rx="2" fill="#0b6fd9"/><path d="M3 6.7 L5.4 9.2 L10 3.8" stroke="#fff" stroke-width="2" fill="none"/></svg>
<div style="left:449.5px;top:350.5px;font-size:13px;line-height:18px;color:#000;font-weight:normal;white-space:nowrap;">変更する</div>
<div style="left:567.4px;top:345.5px;width:83.20000000000005px;height:21.0px;border:2px solid #b8b8b8;border-radius:4px;background:#fff;"><div style="left:4px;top:-1.5px;font-size:13.4px;line-height:21.0px;color:#000;font-weight:normal;white-space:nowrap;letter-spacing:0.55px;">16:00過ぎ</div><svg width="10" height="7" viewBox="0 0 10 7" style="position:absolute;right:2.8px;top:7.0px"><path d="M1.2 1.3 L5 5.2 L8.8 1.3" fill="none" stroke="#000" stroke-width="2.2" stroke-linecap="square"/></svg></div>
<div style="left:666px;top:345.5px;width:134.70000000000005px;height:21.0px;border:2px solid #b8b8b8;border-radius:4px;background:#fff;"><div style="left:2.5px;top:-1px;font-size:13.2px;line-height:21.0px;color:#000;font-weight:normal;white-space:nowrap;letter-spacing:0.4px;">①開所(算定対象)</div><svg width="10" height="7" viewBox="0 0 10 7" style="position:absolute;right:2.8px;top:7.0px"><path d="M1.2 1.3 L5 5.2 L8.8 1.3" fill="none" stroke="#000" stroke-width="2.2" stroke-linecap="square"/></svg></div>
<div style="left:815.6px;top:345.5px;width:35.0px;height:21.0px;border:2px solid #b8b8b8;border-radius:4px;background:#fff;"><div style="left:3.8px;top:-0.8px;font-size:13px;line-height:21.0px;color:#000;font-weight:normal;white-space:nowrap;letter-spacing:0.7px;">14</div><svg width="10" height="7" viewBox="0 0 10 7" style="position:absolute;right:2.6px;top:7.0px"><path d="M1.2 1.3 L5 5.2 L8.8 1.3" fill="none" stroke="#000" stroke-width="2.2" stroke-linecap="square"/></svg></div>
<div style="left:856px;top:348.5px;font-size:13px;line-height:18px;color:#000;font-weight:normal;white-space:nowrap;">時</div>
<div style="left:870px;top:345.5px;width:35.200000000000045px;height:21.0px;border:2px solid #b8b8b8;border-radius:4px;background:#fff;"><div style="left:3.8px;top:-0.8px;font-size:13px;line-height:21.0px;color:#000;font-weight:normal;white-space:nowrap;letter-spacing:0.7px;">0</div><svg width="10" height="7" viewBox="0 0 10 7" style="position:absolute;right:2.6px;top:7.0px"><path d="M1.2 1.3 L5 5.2 L8.8 1.3" fill="none" stroke="#000" stroke-width="2.2" stroke-linecap="square"/></svg></div>
<div style="left:909.5px;top:348.5px;font-size:13px;line-height:18px;color:#000;font-weight:normal;white-space:nowrap;">分</div>
<div style="left:933.7px;top:345.5px;width:35.39999999999998px;height:21.0px;border:2px solid #b8b8b8;border-radius:4px;background:#fff;"><div style="left:3.8px;top:-0.8px;font-size:13px;line-height:21.0px;color:#000;font-weight:normal;white-space:nowrap;letter-spacing:0.7px;">19</div><svg width="10" height="7" viewBox="0 0 10 7" style="position:absolute;right:2.6px;top:7.0px"><path d="M1.2 1.3 L5 5.2 L8.8 1.3" fill="none" stroke="#000" stroke-width="2.2" stroke-linecap="square"/></svg></div>
<div style="left:974.5px;top:348.5px;font-size:13px;line-height:18px;color:#000;font-weight:normal;white-space:nowrap;">時</div>
<div style="left:987.8px;top:345.5px;width:35.40000000000009px;height:21.0px;border:2px solid #b8b8b8;border-radius:4px;background:#fff;"><div style="left:3.8px;top:-0.8px;font-size:13px;line-height:21.0px;color:#000;font-weight:normal;white-space:nowrap;letter-spacing:0.7px;">0</div><svg width="10" height="7" viewBox="0 0 10 7" style="position:absolute;right:2.6px;top:7.0px"><path d="M1.2 1.3 L5 5.2 L8.8 1.3" fill="none" stroke="#000" stroke-width="2.2" stroke-linecap="square"/></svg></div>
<div style="left:1027.8px;top:348.5px;font-size:13px;line-height:18px;color:#000;font-weight:normal;white-space:nowrap;">分</div>
<div style="left:1051.5px;top:345.5px;width:57.90000000000009px;height:21.0px;border:2px solid #b8b8b8;border-radius:4px;background:#fff;"><div style="left:4.5px;top:-1px;font-size:13.5px;line-height:21.0px;color:#000;font-weight:normal;white-space:nowrap;letter-spacing:0px;">なし</div><svg width="10" height="7" viewBox="0 0 10 7" style="position:absolute;right:2.8px;top:7.0px"><path d="M1.2 1.3 L5 5.2 L8.8 1.3" fill="none" stroke="#000" stroke-width="2.2" stroke-linecap="square"/></svg></div>
<div style="left:1146.4px;top:345.5px;width:134.69999999999982px;height:21.0px;border:2px solid #b8b8b8;border-radius:4px;background:#fff;"><div style="left:2.5px;top:-1px;font-size:13.2px;line-height:21.0px;color:#000;font-weight:normal;white-space:nowrap;letter-spacing:0.4px;">①開所(算定対象)</div><svg width="10" height="7" viewBox="0 0 10 7" style="position:absolute;right:2.8px;top:7.0px"><path d="M1.2 1.3 L5 5.2 L8.8 1.3" fill="none" stroke="#000" stroke-width="2.2" stroke-linecap="square"/></svg></div>
<div style="left:1296.0px;top:345.5px;width:35.0px;height:21.0px;border:2px solid #b8b8b8;border-radius:4px;background:#fff;"><div style="left:3.8px;top:-0.8px;font-size:13px;line-height:21.0px;color:#000;font-weight:normal;white-space:nowrap;letter-spacing:0.7px;">14</div><svg width="10" height="7" viewBox="0 0 10 7" style="position:absolute;right:2.6px;top:7.0px"><path d="M1.2 1.3 L5 5.2 L8.8 1.3" fill="none" stroke="#000" stroke-width="2.2" stroke-linecap="square"/></svg></div>
<div style="left:1336.4px;top:348.5px;font-size:13px;line-height:18px;color:#000;font-weight:normal;white-space:nowrap;">時</div>
<div style="left:1350.4px;top:345.5px;width:35.19999999999982px;height:21.0px;border:2px solid #b8b8b8;border-radius:4px;background:#fff;"><div style="left:3.8px;top:-0.8px;font-size:13px;line-height:21.0px;color:#000;font-weight:normal;white-space:nowrap;letter-spacing:0.7px;">0</div><svg width="10" height="7" viewBox="0 0 10 7" style="position:absolute;right:2.6px;top:7.0px"><path d="M1.2 1.3 L5 5.2 L8.8 1.3" fill="none" stroke="#000" stroke-width="2.2" stroke-linecap="square"/></svg></div>
<div style="left:1389.9px;top:348.5px;font-size:13px;line-height:18px;color:#000;font-weight:normal;white-space:nowrap;">分</div>
<div style="left:1414.1px;top:345.5px;width:35.40000000000009px;height:21.0px;border:2px solid #b8b8b8;border-radius:4px;background:#fff;"><div style="left:3.8px;top:-0.8px;font-size:13px;line-height:21.0px;color:#000;font-weight:normal;white-space:nowrap;letter-spacing:0.7px;">19</div><svg width="10" height="7" viewBox="0 0 10 7" style="position:absolute;right:2.6px;top:7.0px"><path d="M1.2 1.3 L5 5.2 L8.8 1.3" fill="none" stroke="#000" stroke-width="2.2" stroke-linecap="square"/></svg></div>
<div style="left:1454.9px;top:348.5px;font-size:13px;line-height:18px;color:#000;font-weight:normal;white-space:nowrap;">時</div>
<div style="left:1468.1999999999998px;top:345.5px;width:35.40000000000009px;height:21.0px;border:2px solid #b8b8b8;border-radius:4px;background:#fff;"><div style="left:3.8px;top:-0.8px;font-size:13px;line-height:21.0px;color:#000;font-weight:normal;white-space:nowrap;letter-spacing:0.7px;">0</div><svg width="10" height="7" viewBox="0 0 10 7" style="position:absolute;right:2.6px;top:7.0px"><path d="M1.2 1.3 L5 5.2 L8.8 1.3" fill="none" stroke="#000" stroke-width="2.2" stroke-linecap="square"/></svg></div>
<div style="left:1508.1999999999998px;top:348.5px;font-size:13px;line-height:18px;color:#000;font-weight:normal;white-space:nowrap;">分</div>
<div style="left:1531.9px;top:345.5px;width:57.90000000000009px;height:21.0px;border:2px solid #b8b8b8;border-radius:4px;background:#fff;"><div style="left:4.5px;top:-1px;font-size:13.5px;line-height:21.0px;color:#000;font-weight:normal;white-space:nowrap;letter-spacing:0px;">なし</div><svg width="10" height="7" viewBox="0 0 10 7" style="position:absolute;right:2.8px;top:7.0px"><path d="M1.2 1.3 L5 5.2 L8.8 1.3" fill="none" stroke="#000" stroke-width="2.2" stroke-linecap="square"/></svg></div>
<div style="left:137px;top:380px;width:1564.6px;height:55px;background:#b3e5fc;"></div>
<div style="left:137px;top:435px;width:1564.6px;height:1px;background:#ababab;"></div>
<div style="left:30.5px;top:436px;width:106.5px;height:1px;background:#c4c4c4;"></div>
<div style="left:36px;top:399.5px;font-size:16px;line-height:22px;color:#1565c0;font-weight:bold;white-space:nowrap;-webkit-text-stroke:0.15px #1565c0;letter-spacing:0.3px;">5(土)</div>
<div style="left:142.5px;top:395.5px;width:136.0px;height:21.0px;border:2px solid #b8b8b8;border-radius:4px;background:#fff;"><div style="left:5px;top:-0.5px;font-size:13px;line-height:21.0px;color:#000;font-weight:normal;white-space:nowrap;letter-spacing:0px;">土曜型</div><svg width="10" height="7" viewBox="0 0 10 7" style="position:absolute;right:2.8px;top:7.0px"><path d="M1.2 1.3 L5 5.2 L8.8 1.3" fill="none" stroke="#000" stroke-width="2.2" stroke-linecap="square"/></svg></div>
<div style="left:294px;top:391.0px;font-size:13px;line-height:18px;color:#000;font-weight:normal;white-space:nowrap;">区分1は下記のみ受入</div>
<svg style="left:298px;top:410.5px" width="13" height="13" viewBox="0 0 13 13"><rect x="0" y="0" width="13" height="13" rx="2" fill="#0b6fd9"/><path d="M3 6.7 L5.4 9.2 L10 3.8" stroke="#fff" stroke-width="2" fill="none"/></svg>
<div style="left:314px;top:410.0px;font-size:13px;line-height:18px;color:#000;font-weight:normal;white-space:nowrap;">スポット利用</div>
<div style="left:567.4px;top:395.5px;width:83.20000000000005px;height:21.0px;border:2px solid #b8b8b8;border-radius:4px;background:#fff;"><div style="left:4px;top:-1.5px;font-size:13.4px;line-height:21.0px;color:#000;font-weight:normal;white-space:nowrap;letter-spacing:0.55px;">16:00過ぎ</div><svg width="10" height="7" viewBox="0 0 10 7" style="position:absolute;right:2.8px;top:7.0px"><path d="M1.2 1.3 L5 5.2 L8.8 1.3" fill="none" stroke="#000" stroke-width="2.2" stroke-linecap="square"/></svg></div>
<div style="left:666px;top:395.5px;width:134.70000000000005px;height:21.0px;border:2px solid #b8b8b8;border-radius:4px;background:#fff;"><div style="left:2.5px;top:-1px;font-size:13.2px;line-height:21.0px;color:#000;font-weight:normal;white-space:nowrap;letter-spacing:0.4px;">①開所(算定対象)</div><svg width="10" height="7" viewBox="0 0 10 7" style="position:absolute;right:2.8px;top:7.0px"><path d="M1.2 1.3 L5 5.2 L8.8 1.3" fill="none" stroke="#000" stroke-width="2.2" stroke-linecap="square"/></svg></div>
<div style="left:815.6px;top:395.5px;width:35.0px;height:21.0px;border:2px solid #b8b8b8;border-radius:4px;background:#fff;"><div style="left:3.8px;top:-0.8px;font-size:13px;line-height:21.0px;color:#000;font-weight:normal;white-space:nowrap;letter-spacing:0.7px;">8</div><svg width="10" height="7" viewBox="0 0 10 7" style="position:absolute;right:2.6px;top:7.0px"><path d="M1.2 1.3 L5 5.2 L8.8 1.3" fill="none" stroke="#000" stroke-width="2.2" stroke-linecap="square"/></svg></div>
<div style="left:856px;top:398.5px;font-size:13px;line-height:18px;color:#000;font-weight:normal;white-space:nowrap;">時</div>
<div style="left:870px;top:395.5px;width:35.200000000000045px;height:21.0px;border:2px solid #b8b8b8;border-radius:4px;background:#fff;"><div style="left:3.8px;top:-0.8px;font-size:13px;line-height:21.0px;color:#000;font-weight:normal;white-space:nowrap;letter-spacing:0.7px;">30</div><svg width="10" height="7" viewBox="0 0 10 7" style="position:absolute;right:2.6px;top:7.0px"><path d="M1.2 1.3 L5 5.2 L8.8 1.3" fill="none" stroke="#000" stroke-width="2.2" stroke-linecap="square"/></svg></div>
<div style="left:909.5px;top:398.5px;font-size:13px;line-height:18px;color:#000;font-weight:normal;white-space:nowrap;">分</div>
<div style="left:933.7px;top:395.5px;width:35.39999999999998px;height:21.0px;border:2px solid #b8b8b8;border-radius:4px;background:#fff;"><div style="left:3.8px;top:-0.8px;font-size:13px;line-height:21.0px;color:#000;font-weight:normal;white-space:nowrap;letter-spacing:0.7px;">19</div><svg width="10" height="7" viewBox="0 0 10 7" style="position:absolute;right:2.6px;top:7.0px"><path d="M1.2 1.3 L5 5.2 L8.8 1.3" fill="none" stroke="#000" stroke-width="2.2" stroke-linecap="square"/></svg></div>
<div style="left:974.5px;top:398.5px;font-size:13px;line-height:18px;color:#000;font-weight:normal;white-space:nowrap;">時</div>
<div style="left:987.8px;top:395.5px;width:35.40000000000009px;height:21.0px;border:2px solid #b8b8b8;border-radius:4px;background:#fff;"><div style="left:3.8px;top:-0.8px;font-size:13px;line-height:21.0px;color:#000;font-weight:normal;white-space:nowrap;letter-spacing:0.7px;">0</div><svg width="10" height="7" viewBox="0 0 10 7" style="position:absolute;right:2.6px;top:7.0px"><path d="M1.2 1.3 L5 5.2 L8.8 1.3" fill="none" stroke="#000" stroke-width="2.2" stroke-linecap="square"/></svg></div>
<div style="left:1027.8px;top:398.5px;font-size:13px;line-height:18px;color:#000;font-weight:normal;white-space:nowrap;">分</div>
<div style="left:1051.5px;top:395.5px;width:57.90000000000009px;height:21.0px;border:2px solid #b8b8b8;border-radius:4px;background:#fff;"><div style="left:4.5px;top:-1px;font-size:13.5px;line-height:21.0px;color:#000;font-weight:normal;white-space:nowrap;letter-spacing:0px;">なし</div><svg width="10" height="7" viewBox="0 0 10 7" style="position:absolute;right:2.8px;top:7.0px"><path d="M1.2 1.3 L5 5.2 L8.8 1.3" fill="none" stroke="#000" stroke-width="2.2" stroke-linecap="square"/></svg></div>
<div style="left:1146.4px;top:395.5px;width:134.69999999999982px;height:21.0px;border:2px solid #b8b8b8;border-radius:4px;background:#fff;"><div style="left:2.5px;top:-1px;font-size:13.2px;line-height:21.0px;color:#000;font-weight:normal;white-space:nowrap;letter-spacing:0.4px;">①開所(算定対象)</div><svg width="10" height="7" viewBox="0 0 10 7" style="position:absolute;right:2.8px;top:7.0px"><path d="M1.2 1.3 L5 5.2 L8.8 1.3" fill="none" stroke="#000" stroke-width="2.2" stroke-linecap="square"/></svg></div>
<div style="left:1296.0px;top:395.5px;width:35.0px;height:21.0px;border:2px solid #b8b8b8;border-radius:4px;background:#fff;"><div style="left:3.8px;top:-0.8px;font-size:13px;line-height:21.0px;color:#000;font-weight:normal;white-space:nowrap;letter-spacing:0.7px;">8</div><svg width="10" height="7" viewBox="0 0 10 7" style="position:absolute;right:2.6px;top:7.0px"><path d="M1.2 1.3 L5 5.2 L8.8 1.3" fill="none" stroke="#000" stroke-width="2.2" stroke-linecap="square"/></svg></div>
<div style="left:1336.4px;top:398.5px;font-size:13px;line-height:18px;color:#000;font-weight:normal;white-space:nowrap;">時</div>
<div style="left:1350.4px;top:395.5px;width:35.19999999999982px;height:21.0px;border:2px solid #b8b8b8;border-radius:4px;background:#fff;"><div style="left:3.8px;top:-0.8px;font-size:13px;line-height:21.0px;color:#000;font-weight:normal;white-space:nowrap;letter-spacing:0.7px;">30</div><svg width="10" height="7" viewBox="0 0 10 7" style="position:absolute;right:2.6px;top:7.0px"><path d="M1.2 1.3 L5 5.2 L8.8 1.3" fill="none" stroke="#000" stroke-width="2.2" stroke-linecap="square"/></svg></div>
<div style="left:1389.9px;top:398.5px;font-size:13px;line-height:18px;color:#000;font-weight:normal;white-space:nowrap;">分</div>
<div style="left:1414.1px;top:395.5px;width:35.40000000000009px;height:21.0px;border:2px solid #b8b8b8;border-radius:4px;background:#fff;"><div style="left:3.8px;top:-0.8px;font-size:13px;line-height:21.0px;color:#000;font-weight:normal;white-space:nowrap;letter-spacing:0.7px;">19</div><svg width="10" height="7" viewBox="0 0 10 7" style="position:absolute;right:2.6px;top:7.0px"><path d="M1.2 1.3 L5 5.2 L8.8 1.3" fill="none" stroke="#000" stroke-width="2.2" stroke-linecap="square"/></svg></div>
<div style="left:1454.9px;top:398.5px;font-size:13px;line-height:18px;color:#000;font-weight:normal;white-space:nowrap;">時</div>
<div style="left:1468.1999999999998px;top:395.5px;width:35.40000000000009px;height:21.0px;border:2px solid #b8b8b8;border-radius:4px;background:#fff;"><div style="left:3.8px;top:-0.8px;font-size:13px;line-height:21.0px;color:#000;font-weight:normal;white-space:nowrap;letter-spacing:0.7px;">0</div><svg width="10" height="7" viewBox="0 0 10 7" style="position:absolute;right:2.6px;top:7.0px"><path d="M1.2 1.3 L5 5.2 L8.8 1.3" fill="none" stroke="#000" stroke-width="2.2" stroke-linecap="square"/></svg></div>
<div style="left:1508.1999999999998px;top:398.5px;font-size:13px;line-height:18px;color:#000;font-weight:normal;white-space:nowrap;">分</div>
<div style="left:1531.9px;top:395.5px;width:57.90000000000009px;height:21.0px;border:2px solid #b8b8b8;border-radius:4px;background:#fff;"><div style="left:4.5px;top:-1px;font-size:13.5px;line-height:21.0px;color:#000;font-weight:normal;white-space:nowrap;letter-spacing:0px;">なし</div><svg width="10" height="7" viewBox="0 0 10 7" style="position:absolute;right:2.8px;top:7.0px"><path d="M1.2 1.3 L5 5.2 L8.8 1.3" fill="none" stroke="#000" stroke-width="2.2" stroke-linecap="square"/></svg></div>
<div style="left:137px;top:436px;width:1564.6px;height:42px;background:#cccccc;"></div>
<div style="left:137px;top:478px;width:1564.6px;height:2px;background:#959595;"></div>
<div style="left:30.5px;top:479px;width:106.5px;height:1px;background:#959595;"></div>
<div style="left:36px;top:448.5px;font-size:16px;line-height:22px;color:#e91e63;font-weight:bold;white-space:nowrap;-webkit-text-stroke:0.15px #e91e63;letter-spacing:0.3px;">6(日)</div>
<div style="left:142.5px;top:444.5px;width:136.0px;height:21.0px;border:2px solid #b8b8b8;border-radius:4px;background:#fff;"><div style="left:5px;top:-0.5px;font-size:13px;line-height:21.0px;color:#000;font-weight:normal;white-space:nowrap;letter-spacing:0px;">閉所</div><svg width="10" height="7" viewBox="0 0 10 7" style="position:absolute;right:2.8px;top:7.0px"><path d="M1.2 1.3 L5 5.2 L8.8 1.3" fill="none" stroke="#000" stroke-width="2.2" stroke-linecap="square"/></svg></div>
<div style="left:137px;top:522px;width:1564.6px;height:1px;background:#ababab;"></div>
<div style="left:30.5px;top:522px;width:106.5px;height:1px;background:#ababab;"></div>
<div style="left:36px;top:492.5px;font-size:16px;line-height:22px;color:#000;font-weight:bold;white-space:nowrap;-webkit-text-stroke:0.15px #000;letter-spacing:0.3px;">7(月)</div>
<div style="left:142.5px;top:488.5px;width:136.0px;height:21.0px;border:2px solid #b8b8b8;border-radius:4px;background:#fff;"><div style="left:5px;top:-0.5px;font-size:13px;line-height:21.0px;color:#000;font-weight:normal;white-space:nowrap;letter-spacing:0px;">平日型（通常受入）</div><svg width="10" height="7" viewBox="0 0 10 7" style="position:absolute;right:2.8px;top:7.0px"><path d="M1.2 1.3 L5 5.2 L8.8 1.3" fill="none" stroke="#000" stroke-width="2.2" stroke-linecap="square"/></svg></div>
<div style="left:294px;top:493.5px;font-size:13px;line-height:18px;color:#000;font-weight:normal;white-space:nowrap;">区分1は通常受入</div>
<svg style="left:434px;top:494.0px" width="13" height="13" viewBox="0 0 13 13"><rect x="0" y="0" width="13" height="13" rx="2" fill="#0b6fd9"/><path d="M3 6.7 L5.4 9.2 L10 3.8" stroke="#fff" stroke-width="2" fill="none"/></svg>
<div style="left:449.5px;top:493.5px;font-size:13px;line-height:18px;color:#000;font-weight:normal;white-space:nowrap;">変更する</div>
<div style="left:567.4px;top:488.5px;width:83.20000000000005px;height:21.0px;border:2px solid #b8b8b8;border-radius:4px;background:#fff;"><div style="left:4px;top:-1.5px;font-size:13.4px;line-height:21.0px;color:#000;font-weight:normal;white-space:nowrap;letter-spacing:0.55px;">16:00過ぎ</div><svg width="10" height="7" viewBox="0 0 10 7" style="position:absolute;right:2.8px;top:7.0px"><path d="M1.2 1.3 L5 5.2 L8.8 1.3" fill="none" stroke="#000" stroke-width="2.2" stroke-linecap="square"/></svg></div>
<div style="left:666px;top:488.5px;width:134.70000000000005px;height:21.0px;border:2px solid #b8b8b8;border-radius:4px;background:#fff;"><div style="left:2.5px;top:-1px;font-size:13.2px;line-height:21.0px;color:#000;font-weight:normal;white-space:nowrap;letter-spacing:0.4px;">①開所(算定対象)</div><svg width="10" height="7" viewBox="0 0 10 7" style="position:absolute;right:2.8px;top:7.0px"><path d="M1.2 1.3 L5 5.2 L8.8 1.3" fill="none" stroke="#000" stroke-width="2.2" stroke-linecap="square"/></svg></div>
<div style="left:815.6px;top:488.5px;width:35.0px;height:21.0px;border:2px solid #b8b8b8;border-radius:4px;background:#fff;"><div style="left:3.8px;top:-0.8px;font-size:13px;line-height:21.0px;color:#000;font-weight:normal;white-space:nowrap;letter-spacing:0.7px;">14</div><svg width="10" height="7" viewBox="0 0 10 7" style="position:absolute;right:2.6px;top:7.0px"><path d="M1.2 1.3 L5 5.2 L8.8 1.3" fill="none" stroke="#000" stroke-width="2.2" stroke-linecap="square"/></svg></div>
<div style="left:856px;top:491.5px;font-size:13px;line-height:18px;color:#000;font-weight:normal;white-space:nowrap;">時</div>
<div style="left:870px;top:488.5px;width:35.200000000000045px;height:21.0px;border:2px solid #b8b8b8;border-radius:4px;background:#fff;"><div style="left:3.8px;top:-0.8px;font-size:13px;line-height:21.0px;color:#000;font-weight:normal;white-space:nowrap;letter-spacing:0.7px;">0</div><svg width="10" height="7" viewBox="0 0 10 7" style="position:absolute;right:2.6px;top:7.0px"><path d="M1.2 1.3 L5 5.2 L8.8 1.3" fill="none" stroke="#000" stroke-width="2.2" stroke-linecap="square"/></svg></div>
<div style="left:909.5px;top:491.5px;font-size:13px;line-height:18px;color:#000;font-weight:normal;white-space:nowrap;">分</div>
<div style="left:933.7px;top:488.5px;width:35.39999999999998px;height:21.0px;border:2px solid #b8b8b8;border-radius:4px;background:#fff;"><div style="left:3.8px;top:-0.8px;font-size:13px;line-height:21.0px;color:#000;font-weight:normal;white-space:nowrap;letter-spacing:0.7px;">19</div><svg width="10" height="7" viewBox="0 0 10 7" style="position:absolute;right:2.6px;top:7.0px"><path d="M1.2 1.3 L5 5.2 L8.8 1.3" fill="none" stroke="#000" stroke-width="2.2" stroke-linecap="square"/></svg></div>
<div style="left:974.5px;top:491.5px;font-size:13px;line-height:18px;color:#000;font-weight:normal;white-space:nowrap;">時</div>
<div style="left:987.8px;top:488.5px;width:35.40000000000009px;height:21.0px;border:2px solid #b8b8b8;border-radius:4px;background:#fff;"><div style="left:3.8px;top:-0.8px;font-size:13px;line-height:21.0px;color:#000;font-weight:normal;white-space:nowrap;letter-spacing:0.7px;">0</div><svg width="10" height="7" viewBox="0 0 10 7" style="position:absolute;right:2.6px;top:7.0px"><path d="M1.2 1.3 L5 5.2 L8.8 1.3" fill="none" stroke="#000" stroke-width="2.2" stroke-linecap="square"/></svg></div>
<div style="left:1027.8px;top:491.5px;font-size:13px;line-height:18px;color:#000;font-weight:normal;white-space:nowrap;">分</div>
<div style="left:1051.5px;top:488.5px;width:57.90000000000009px;height:21.0px;border:2px solid #b8b8b8;border-radius:4px;background:#fff;"><div style="left:4.5px;top:-1px;font-size:13.5px;line-height:21.0px;color:#000;font-weight:normal;white-space:nowrap;letter-spacing:0px;">なし</div><svg width="10" height="7" viewBox="0 0 10 7" style="position:absolute;right:2.8px;top:7.0px"><path d="M1.2 1.3 L5 5.2 L8.8 1.3" fill="none" stroke="#000" stroke-width="2.2" stroke-linecap="square"/></svg></div>
<div style="left:1146.4px;top:488.5px;width:134.69999999999982px;height:21.0px;border:2px solid #b8b8b8;border-radius:4px;background:#fff;"><div style="left:2.5px;top:-1px;font-size:13.2px;line-height:21.0px;color:#000;font-weight:normal;white-space:nowrap;letter-spacing:0.4px;">①開所(算定対象)</div><svg width="10" height="7" viewBox="0 0 10 7" style="position:absolute;right:2.8px;top:7.0px"><path d="M1.2 1.3 L5 5.2 L8.8 1.3" fill="none" stroke="#000" stroke-width="2.2" stroke-linecap="square"/></svg></div>
<div style="left:1296.0px;top:488.5px;width:35.0px;height:21.0px;border:2px solid #b8b8b8;border-radius:4px;background:#fff;"><div style="left:3.8px;top:-0.8px;font-size:13px;line-height:21.0px;color:#000;font-weight:normal;white-space:nowrap;letter-spacing:0.7px;">14</div><svg width="10" height="7" viewBox="0 0 10 7" style="position:absolute;right:2.6px;top:7.0px"><path d="M1.2 1.3 L5 5.2 L8.8 1.3" fill="none" stroke="#000" stroke-width="2.2" stroke-linecap="square"/></svg></div>
<div style="left:1336.4px;top:491.5px;font-size:13px;line-height:18px;color:#000;font-weight:normal;white-space:nowrap;">時</div>
<div style="left:1350.4px;top:488.5px;width:35.19999999999982px;height:21.0px;border:2px solid #b8b8b8;border-radius:4px;background:#fff;"><div style="left:3.8px;top:-0.8px;font-size:13px;line-height:21.0px;color:#000;font-weight:normal;white-space:nowrap;letter-spacing:0.7px;">0</div><svg width="10" height="7" viewBox="0 0 10 7" style="position:absolute;right:2.6px;top:7.0px"><path d="M1.2 1.3 L5 5.2 L8.8 1.3" fill="none" stroke="#000" stroke-width="2.2" stroke-linecap="square"/></svg></div>
<div style="left:1389.9px;top:491.5px;font-size:13px;line-height:18px;color:#000;font-weight:normal;white-space:nowrap;">分</div>
<div style="left:1414.1px;top:488.5px;width:35.40000000000009px;height:21.0px;border:2px solid #b8b8b8;border-radius:4px;background:#fff;"><div style="left:3.8px;top:-0.8px;font-size:13px;line-height:21.0px;color:#000;font-weight:normal;white-space:nowrap;letter-spacing:0.7px;">19</div><svg width="10" height="7" viewBox="0 0 10 7" style="position:absolute;right:2.6px;top:7.0px"><path d="M1.2 1.3 L5 5.2 L8.8 1.3" fill="none" stroke="#000" stroke-width="2.2" stroke-linecap="square"/></svg></div>
<div style="left:1454.9px;top:491.5px;font-size:13px;line-height:18px;color:#000;font-weight:normal;white-space:nowrap;">時</div>
<div style="left:1468.1999999999998px;top:488.5px;width:35.40000000000009px;height:21.0px;border:2px solid #b8b8b8;border-radius:4px;background:#fff;"><div style="left:3.8px;top:-0.8px;font-size:13px;line-height:21.0px;color:#000;font-weight:normal;white-space:nowrap;letter-spacing:0.7px;">0</div><svg width="10" height="7" viewBox="0 0 10 7" style="position:absolute;right:2.6px;top:7.0px"><path d="M1.2 1.3 L5 5.2 L8.8 1.3" fill="none" stroke="#000" stroke-width="2.2" stroke-linecap="square"/></svg></div>
<div style="left:1508.1999999999998px;top:491.5px;font-size:13px;line-height:18px;color:#000;font-weight:normal;white-space:nowrap;">分</div>
<div style="left:1531.9px;top:488.5px;width:57.90000000000009px;height:21.0px;border:2px solid #b8b8b8;border-radius:4px;background:#fff;"><div style="left:4.5px;top:-1px;font-size:13.5px;line-height:21.0px;color:#000;font-weight:normal;white-space:nowrap;letter-spacing:0px;">なし</div><svg width="10" height="7" viewBox="0 0 10 7" style="position:absolute;right:2.8px;top:7.0px"><path d="M1.2 1.3 L5 5.2 L8.8 1.3" fill="none" stroke="#000" stroke-width="2.2" stroke-linecap="square"/></svg></div>
<div style="left:137px;top:565px;width:1564.6px;height:1px;background:#ababab;"></div>
<div style="left:30.5px;top:565px;width:106.5px;height:1px;background:#ababab;"></div>
<div style="left:36px;top:535.5px;font-size:16px;line-height:22px;color:#000;font-weight:bold;white-space:nowrap;-webkit-text-stroke:0.15px #000;letter-spacing:0.3px;">8(火)</div>
<div style="left:142.5px;top:531.5px;width:136.0px;height:21.0px;border:2px solid #b8b8b8;border-radius:4px;background:#fff;"><div style="left:5px;top:-0.5px;font-size:13px;line-height:21.0px;color:#000;font-weight:normal;white-space:nowrap;letter-spacing:0px;">平日型（通常受入）</div><svg width="10" height="7" viewBox="0 0 10 7" style="position:absolute;right:2.8px;top:7.0px"><path d="M1.2 1.3 L5 5.2 L8.8 1.3" fill="none" stroke="#000" stroke-width="2.2" stroke-linecap="square"/></svg></div>
<div style="left:294px;top:536.5px;font-size:13px;line-height:18px;color:#000;font-weight:normal;white-space:nowrap;">区分1は通常受入</div>
<svg style="left:434px;top:537.0px" width="13" height="13" viewBox="0 0 13 13"><rect x="0" y="0" width="13" height="13" rx="2" fill="#0b6fd9"/><path d="M3 6.7 L5.4 9.2 L10 3.8" stroke="#fff" stroke-width="2" fill="none"/></svg>
<div style="left:449.5px;top:536.5px;font-size:13px;line-height:18px;color:#000;font-weight:normal;white-space:nowrap;">変更する</div>
<div style="left:567.4px;top:531.5px;width:83.20000000000005px;height:21.0px;border:2px solid #b8b8b8;border-radius:4px;background:#fff;"><div style="left:4px;top:-1.5px;font-size:13.4px;line-height:21.0px;color:#000;font-weight:normal;white-space:nowrap;letter-spacing:0.55px;">16:00過ぎ</div><svg width="10" height="7" viewBox="0 0 10 7" style="position:absolute;right:2.8px;top:7.0px"><path d="M1.2 1.3 L5 5.2 L8.8 1.3" fill="none" stroke="#000" stroke-width="2.2" stroke-linecap="square"/></svg></div>
<div style="left:666px;top:531.5px;width:134.70000000000005px;height:21.0px;border:2px solid #b8b8b8;border-radius:4px;background:#fff;"><div style="left:2.5px;top:-1px;font-size:13.2px;line-height:21.0px;color:#000;font-weight:normal;white-space:nowrap;letter-spacing:0.4px;">①開所(算定対象)</div><svg width="10" height="7" viewBox="0 0 10 7" style="position:absolute;right:2.8px;top:7.0px"><path d="M1.2 1.3 L5 5.2 L8.8 1.3" fill="none" stroke="#000" stroke-width="2.2" stroke-linecap="square"/></svg></div>
<div style="left:815.6px;top:531.5px;width:35.0px;height:21.0px;border:2px solid #b8b8b8;border-radius:4px;background:#fff;"><div style="left:3.8px;top:-0.8px;font-size:13px;line-height:21.0px;color:#000;font-weight:normal;white-space:nowrap;letter-spacing:0.7px;">14</div><svg width="10" height="7" viewBox="0 0 10 7" style="position:absolute;right:2.6px;top:7.0px"><path d="M1.2 1.3 L5 5.2 L8.8 1.3" fill="none" stroke="#000" stroke-width="2.2" stroke-linecap="square"/></svg></div>
<div style="left:856px;top:534.5px;font-size:13px;line-height:18px;color:#000;font-weight:normal;white-space:nowrap;">時</div>
<div style="left:870px;top:531.5px;width:35.200000000000045px;height:21.0px;border:2px solid #b8b8b8;border-radius:4px;background:#fff;"><div style="left:3.8px;top:-0.8px;font-size:13px;line-height:21.0px;color:#000;font-weight:normal;white-space:nowrap;letter-spacing:0.7px;">0</div><svg width="10" height="7" viewBox="0 0 10 7" style="position:absolute;right:2.6px;top:7.0px"><path d="M1.2 1.3 L5 5.2 L8.8 1.3" fill="none" stroke="#000" stroke-width="2.2" stroke-linecap="square"/></svg></div>
<div style="left:909.5px;top:534.5px;font-size:13px;line-height:18px;color:#000;font-weight:normal;white-space:nowrap;">分</div>
<div style="left:933.7px;top:531.5px;width:35.39999999999998px;height:21.0px;border:2px solid #b8b8b8;border-radius:4px;background:#fff;"><div style="left:3.8px;top:-0.8px;font-size:13px;line-height:21.0px;color:#000;font-weight:normal;white-space:nowrap;letter-spacing:0.7px;">19</div><svg width="10" height="7" viewBox="0 0 10 7" style="position:absolute;right:2.6px;top:7.0px"><path d="M1.2 1.3 L5 5.2 L8.8 1.3" fill="none" stroke="#000" stroke-width="2.2" stroke-linecap="square"/></svg></div>
<div style="left:974.5px;top:534.5px;font-size:13px;line-height:18px;color:#000;font-weight:normal;white-space:nowrap;">時</div>
<div style="left:987.8px;top:531.5px;width:35.40000000000009px;height:21.0px;border:2px solid #b8b8b8;border-radius:4px;background:#fff;"><div style="left:3.8px;top:-0.8px;font-size:13px;line-height:21.0px;color:#000;font-weight:normal;white-space:nowrap;letter-spacing:0.7px;">0</div><svg width="10" height="7" viewBox="0 0 10 7" style="position:absolute;right:2.6px;top:7.0px"><path d="M1.2 1.3 L5 5.2 L8.8 1.3" fill="none" stroke="#000" stroke-width="2.2" stroke-linecap="square"/></svg></div>
<div style="left:1027.8px;top:534.5px;font-size:13px;line-height:18px;color:#000;font-weight:normal;white-space:nowrap;">分</div>
<div style="left:1051.5px;top:531.5px;width:57.90000000000009px;height:21.0px;border:2px solid #b8b8b8;border-radius:4px;background:#fff;"><div style="left:4.5px;top:-1px;font-size:13.5px;line-height:21.0px;color:#000;font-weight:normal;white-space:nowrap;letter-spacing:0px;">なし</div><svg width="10" height="7" viewBox="0 0 10 7" style="position:absolute;right:2.8px;top:7.0px"><path d="M1.2 1.3 L5 5.2 L8.8 1.3" fill="none" stroke="#000" stroke-width="2.2" stroke-linecap="square"/></svg></div>
<div style="left:1146.4px;top:531.5px;width:134.69999999999982px;height:21.0px;border:2px solid #b8b8b8;border-radius:4px;background:#fff;"><div style="left:2.5px;top:-1px;font-size:13.2px;line-height:21.0px;color:#000;font-weight:normal;white-space:nowrap;letter-spacing:0.4px;">①開所(算定対象)</div><svg width="10" height="7" viewBox="0 0 10 7" style="position:absolute;right:2.8px;top:7.0px"><path d="M1.2 1.3 L5 5.2 L8.8 1.3" fill="none" stroke="#000" stroke-width="2.2" stroke-linecap="square"/></svg></div>
<div style="left:1296.0px;top:531.5px;width:35.0px;height:21.0px;border:2px solid #b8b8b8;border-radius:4px;background:#fff;"><div style="left:3.8px;top:-0.8px;font-size:13px;line-height:21.0px;color:#000;font-weight:normal;white-space:nowrap;letter-spacing:0.7px;">14</div><svg width="10" height="7" viewBox="0 0 10 7" style="position:absolute;right:2.6px;top:7.0px"><path d="M1.2 1.3 L5 5.2 L8.8 1.3" fill="none" stroke="#000" stroke-width="2.2" stroke-linecap="square"/></svg></div>
<div style="left:1336.4px;top:534.5px;font-size:13px;line-height:18px;color:#000;font-weight:normal;white-space:nowrap;">時</div>
<div style="left:1350.4px;top:531.5px;width:35.19999999999982px;height:21.0px;border:2px solid #b8b8b8;border-radius:4px;background:#fff;"><div style="left:3.8px;top:-0.8px;font-size:13px;line-height:21.0px;color:#000;font-weight:normal;white-space:nowrap;letter-spacing:0.7px;">0</div><svg width="10" height="7" viewBox="0 0 10 7" style="position:absolute;right:2.6px;top:7.0px"><path d="M1.2 1.3 L5 5.2 L8.8 1.3" fill="none" stroke="#000" stroke-width="2.2" stroke-linecap="square"/></svg></div>
<div style="left:1389.9px;top:534.5px;font-size:13px;line-height:18px;color:#000;font-weight:normal;white-space:nowrap;">分</div>
<div style="left:1414.1px;top:531.5px;width:35.40000000000009px;height:21.0px;border:2px solid #b8b8b8;border-radius:4px;background:#fff;"><div style="left:3.8px;top:-0.8px;font-size:13px;line-height:21.0px;color:#000;font-weight:normal;white-space:nowrap;letter-spacing:0.7px;">19</div><svg width="10" height="7" viewBox="0 0 10 7" style="position:absolute;right:2.6px;top:7.0px"><path d="M1.2 1.3 L5 5.2 L8.8 1.3" fill="none" stroke="#000" stroke-width="2.2" stroke-linecap="square"/></svg></div>
<div style="left:1454.9px;top:534.5px;font-size:13px;line-height:18px;color:#000;font-weight:normal;white-space:nowrap;">時</div>
<div style="left:1468.1999999999998px;top:531.5px;width:35.40000000000009px;height:21.0px;border:2px solid #b8b8b8;border-radius:4px;background:#fff;"><div style="left:3.8px;top:-0.8px;font-size:13px;line-height:21.0px;color:#000;font-weight:normal;white-space:nowrap;letter-spacing:0.7px;">0</div><svg width="10" height="7" viewBox="0 0 10 7" style="position:absolute;right:2.6px;top:7.0px"><path d="M1.2 1.3 L5 5.2 L8.8 1.3" fill="none" stroke="#000" stroke-width="2.2" stroke-linecap="square"/></svg></div>
<div style="left:1508.1999999999998px;top:534.5px;font-size:13px;line-height:18px;color:#000;font-weight:normal;white-space:nowrap;">分</div>
<div style="left:1531.9px;top:531.5px;width:57.90000000000009px;height:21.0px;border:2px solid #b8b8b8;border-radius:4px;background:#fff;"><div style="left:4.5px;top:-1px;font-size:13.5px;line-height:21.0px;color:#000;font-weight:normal;white-space:nowrap;letter-spacing:0px;">なし</div><svg width="10" height="7" viewBox="0 0 10 7" style="position:absolute;right:2.8px;top:7.0px"><path d="M1.2 1.3 L5 5.2 L8.8 1.3" fill="none" stroke="#000" stroke-width="2.2" stroke-linecap="square"/></svg></div>
<div style="left:137px;top:608px;width:1564.6px;height:1px;background:#ababab;"></div>
<div style="left:30.5px;top:608px;width:106.5px;height:1px;background:#ababab;"></div>
<div style="left:36px;top:578.5px;font-size:16px;line-height:22px;color:#000;font-weight:bold;white-space:nowrap;-webkit-text-stroke:0.15px #000;letter-spacing:0.3px;">9(水)</div>
<div style="left:142.5px;top:574.5px;width:136.0px;height:21.0px;border:2px solid #b8b8b8;border-radius:4px;background:#fff;"><div style="left:5px;top:-0.5px;font-size:13px;line-height:21.0px;color:#000;font-weight:normal;white-space:nowrap;letter-spacing:0px;">平日型（通常受入）</div><svg width="10" height="7" viewBox="0 0 10 7" style="position:absolute;right:2.8px;top:7.0px"><path d="M1.2 1.3 L5 5.2 L8.8 1.3" fill="none" stroke="#000" stroke-width="2.2" stroke-linecap="square"/></svg></div>
<div style="left:294px;top:579.5px;font-size:13px;line-height:18px;color:#000;font-weight:normal;white-space:nowrap;">区分1は通常受入</div>
<svg style="left:434px;top:580.0px" width="13" height="13" viewBox="0 0 13 13"><rect x="0" y="0" width="13" height="13" rx="2" fill="#0b6fd9"/><path d="M3 6.7 L5.4 9.2 L10 3.8" stroke="#fff" stroke-width="2" fill="none"/></svg>
<div style="left:449.5px;top:579.5px;font-size:13px;line-height:18px;color:#000;font-weight:normal;white-space:nowrap;">変更する</div>
<div style="left:567.4px;top:574.5px;width:83.20000000000005px;height:21.0px;border:2px solid #b8b8b8;border-radius:4px;background:#fff;"><div style="left:4px;top:-1.5px;font-size:13.4px;line-height:21.0px;color:#000;font-weight:normal;white-space:nowrap;letter-spacing:0.55px;">16:00過ぎ</div><svg width="10" height="7" viewBox="0 0 10 7" style="position:absolute;right:2.8px;top:7.0px"><path d="M1.2 1.3 L5 5.2 L8.8 1.3" fill="none" stroke="#000" stroke-width="2.2" stroke-linecap="square"/></svg></div>
<div style="left:666px;top:574.5px;width:134.70000000000005px;height:21.0px;border:2px solid #b8b8b8;border-radius:4px;background:#fff;"><div style="left:2.5px;top:-1px;font-size:13.2px;line-height:21.0px;color:#000;font-weight:normal;white-space:nowrap;letter-spacing:0.4px;">①開所(算定対象)</div><svg width="10" height="7" viewBox="0 0 10 7" style="position:absolute;right:2.8px;top:7.0px"><path d="M1.2 1.3 L5 5.2 L8.8 1.3" fill="none" stroke="#000" stroke-width="2.2" stroke-linecap="square"/></svg></div>
<div style="left:815.6px;top:574.5px;width:35.0px;height:21.0px;border:2px solid #b8b8b8;border-radius:4px;background:#fff;"><div style="left:3.8px;top:-0.8px;font-size:13px;line-height:21.0px;color:#000;font-weight:normal;white-space:nowrap;letter-spacing:0.7px;">14</div><svg width="10" height="7" viewBox="0 0 10 7" style="position:absolute;right:2.6px;top:7.0px"><path d="M1.2 1.3 L5 5.2 L8.8 1.3" fill="none" stroke="#000" stroke-width="2.2" stroke-linecap="square"/></svg></div>
<div style="left:856px;top:577.5px;font-size:13px;line-height:18px;color:#000;font-weight:normal;white-space:nowrap;">時</div>
<div style="left:870px;top:574.5px;width:35.200000000000045px;height:21.0px;border:2px solid #b8b8b8;border-radius:4px;background:#fff;"><div style="left:3.8px;top:-0.8px;font-size:13px;line-height:21.0px;color:#000;font-weight:normal;white-space:nowrap;letter-spacing:0.7px;">0</div><svg width="10" height="7" viewBox="0 0 10 7" style="position:absolute;right:2.6px;top:7.0px"><path d="M1.2 1.3 L5 5.2 L8.8 1.3" fill="none" stroke="#000" stroke-width="2.2" stroke-linecap="square"/></svg></div>
<div style="left:909.5px;top:577.5px;font-size:13px;line-height:18px;color:#000;font-weight:normal;white-space:nowrap;">分</div>
<div style="left:933.7px;top:574.5px;width:35.39999999999998px;height:21.0px;border:2px solid #b8b8b8;border-radius:4px;background:#fff;"><div style="left:3.8px;top:-0.8px;font-size:13px;line-height:21.0px;color:#000;font-weight:normal;white-space:nowrap;letter-spacing:0.7px;">19</div><svg width="10" height="7" viewBox="0 0 10 7" style="position:absolute;right:2.6px;top:7.0px"><path d="M1.2 1.3 L5 5.2 L8.8 1.3" fill="none" stroke="#000" stroke-width="2.2" stroke-linecap="square"/></svg></div>
<div style="left:974.5px;top:577.5px;font-size:13px;line-height:18px;color:#000;font-weight:normal;white-space:nowrap;">時</div>
<div style="left:987.8px;top:574.5px;width:35.40000000000009px;height:21.0px;border:2px solid #b8b8b8;border-radius:4px;background:#fff;"><div style="left:3.8px;top:-0.8px;font-size:13px;line-height:21.0px;color:#000;font-weight:normal;white-space:nowrap;letter-spacing:0.7px;">0</div><svg width="10" height="7" viewBox="0 0 10 7" style="position:absolute;right:2.6px;top:7.0px"><path d="M1.2 1.3 L5 5.2 L8.8 1.3" fill="none" stroke="#000" stroke-width="2.2" stroke-linecap="square"/></svg></div>
<div style="left:1027.8px;top:577.5px;font-size:13px;line-height:18px;color:#000;font-weight:normal;white-space:nowrap;">分</div>
<div style="left:1051.5px;top:574.5px;width:57.90000000000009px;height:21.0px;border:2px solid #b8b8b8;border-radius:4px;background:#fff;"><div style="left:4.5px;top:-1px;font-size:13.5px;line-height:21.0px;color:#000;font-weight:normal;white-space:nowrap;letter-spacing:0px;">なし</div><svg width="10" height="7" viewBox="0 0 10 7" style="position:absolute;right:2.8px;top:7.0px"><path d="M1.2 1.3 L5 5.2 L8.8 1.3" fill="none" stroke="#000" stroke-width="2.2" stroke-linecap="square"/></svg></div>
<div style="left:1146.4px;top:574.5px;width:134.69999999999982px;height:21.0px;border:2px solid #b8b8b8;border-radius:4px;background:#fff;"><div style="left:2.5px;top:-1px;font-size:13.2px;line-height:21.0px;color:#000;font-weight:normal;white-space:nowrap;letter-spacing:0.4px;">①開所(算定対象)</div><svg width="10" height="7" viewBox="0 0 10 7" style="position:absolute;right:2.8px;top:7.0px"><path d="M1.2 1.3 L5 5.2 L8.8 1.3" fill="none" stroke="#000" stroke-width="2.2" stroke-linecap="square"/></svg></div>
<div style="left:1296.0px;top:574.5px;width:35.0px;height:21.0px;border:2px solid #b8b8b8;border-radius:4px;background:#fff;"><div style="left:3.8px;top:-0.8px;font-size:13px;line-height:21.0px;color:#000;font-weight:normal;white-space:nowrap;letter-spacing:0.7px;">14</div><svg width="10" height="7" viewBox="0 0 10 7" style="position:absolute;right:2.6px;top:7.0px"><path d="M1.2 1.3 L5 5.2 L8.8 1.3" fill="none" stroke="#000" stroke-width="2.2" stroke-linecap="square"/></svg></div>
<div style="left:1336.4px;top:577.5px;font-size:13px;line-height:18px;color:#000;font-weight:normal;white-space:nowrap;">時</div>
<div style="left:1350.4px;top:574.5px;width:35.19999999999982px;height:21.0px;border:2px solid #b8b8b8;border-radius:4px;background:#fff;"><div style="left:3.8px;top:-0.8px;font-size:13px;line-height:21.0px;color:#000;font-weight:normal;white-space:nowrap;letter-spacing:0.7px;">0</div><svg width="10" height="7" viewBox="0 0 10 7" style="position:absolute;right:2.6px;top:7.0px"><path d="M1.2 1.3 L5 5.2 L8.8 1.3" fill="none" stroke="#000" stroke-width="2.2" stroke-linecap="square"/></svg></div>
<div style="left:1389.9px;top:577.5px;font-size:13px;line-height:18px;color:#000;font-weight:normal;white-space:nowrap;">分</div>
<div style="left:1414.1px;top:574.5px;width:35.40000000000009px;height:21.0px;border:2px solid #b8b8b8;border-radius:4px;background:#fff;"><div style="left:3.8px;top:-0.8px;font-size:13px;line-height:21.0px;color:#000;font-weight:normal;white-space:nowrap;letter-spacing:0.7px;">19</div><svg width="10" height="7" viewBox="0 0 10 7" style="position:absolute;right:2.6px;top:7.0px"><path d="M1.2 1.3 L5 5.2 L8.8 1.3" fill="none" stroke="#000" stroke-width="2.2" stroke-linecap="square"/></svg></div>
<div style="left:1454.9px;top:577.5px;font-size:13px;line-height:18px;color:#000;font-weight:normal;white-space:nowrap;">時</div>
<div style="left:1468.1999999999998px;top:574.5px;width:35.40000000000009px;height:21.0px;border:2px solid #b8b8b8;border-radius:4px;background:#fff;"><div style="left:3.8px;top:-0.8px;font-size:13px;line-height:21.0px;color:#000;font-weight:normal;white-space:nowrap;letter-spacing:0.7px;">0</div><svg width="10" height="7" viewBox="0 0 10 7" style="position:absolute;right:2.6px;top:7.0px"><path d="M1.2 1.3 L5 5.2 L8.8 1.3" fill="none" stroke="#000" stroke-width="2.2" stroke-linecap="square"/></svg></div>
<div style="left:1508.1999999999998px;top:577.5px;font-size:13px;line-height:18px;color:#000;font-weight:normal;white-space:nowrap;">分</div>
<div style="left:1531.9px;top:574.5px;width:57.90000000000009px;height:21.0px;border:2px solid #b8b8b8;border-radius:4px;background:#fff;"><div style="left:4.5px;top:-1px;font-size:13.5px;line-height:21.0px;color:#000;font-weight:normal;white-space:nowrap;letter-spacing:0px;">なし</div><svg width="10" height="7" viewBox="0 0 10 7" style="position:absolute;right:2.8px;top:7.0px"><path d="M1.2 1.3 L5 5.2 L8.8 1.3" fill="none" stroke="#000" stroke-width="2.2" stroke-linecap="square"/></svg></div>
<div style="left:137px;top:651px;width:1564.6px;height:1px;background:#ababab;"></div>
<div style="left:30.5px;top:651px;width:106.5px;height:1px;background:#ababab;"></div>
<div style="left:36px;top:621.5px;font-size:16px;line-height:22px;color:#000;font-weight:bold;white-space:nowrap;-webkit-text-stroke:0.15px #000;letter-spacing:0.3px;">10(木)</div>
<div style="left:142.5px;top:617.5px;width:136.0px;height:21.0px;border:2px solid #b8b8b8;border-radius:4px;background:#fff;"><div style="left:5px;top:-0.5px;font-size:13px;line-height:21.0px;color:#000;font-weight:normal;white-space:nowrap;letter-spacing:0px;">平日型（通常受入）</div><svg width="10" height="7" viewBox="0 0 10 7" style="position:absolute;right:2.8px;top:7.0px"><path d="M1.2 1.3 L5 5.2 L8.8 1.3" fill="none" stroke="#000" stroke-width="2.2" stroke-linecap="square"/></svg></div>
<div style="left:294px;top:622.5px;font-size:13px;line-height:18px;color:#000;font-weight:normal;white-space:nowrap;">区分1は通常受入</div>
<svg style="left:434px;top:623.0px" width="13" height="13" viewBox="0 0 13 13"><rect x="0" y="0" width="13" height="13" rx="2" fill="#0b6fd9"/><path d="M3 6.7 L5.4 9.2 L10 3.8" stroke="#fff" stroke-width="2" fill="none"/></svg>
<div style="left:449.5px;top:622.5px;font-size:13px;line-height:18px;color:#000;font-weight:normal;white-space:nowrap;">変更する</div>
<div style="left:567.4px;top:617.5px;width:83.20000000000005px;height:21.0px;border:2px solid #b8b8b8;border-radius:4px;background:#fff;"><div style="left:4px;top:-1.5px;font-size:13.4px;line-height:21.0px;color:#000;font-weight:normal;white-space:nowrap;letter-spacing:0.55px;">16:00過ぎ</div><svg width="10" height="7" viewBox="0 0 10 7" style="position:absolute;right:2.8px;top:7.0px"><path d="M1.2 1.3 L5 5.2 L8.8 1.3" fill="none" stroke="#000" stroke-width="2.2" stroke-linecap="square"/></svg></div>
<div style="left:666px;top:617.5px;width:134.70000000000005px;height:21.0px;border:2px solid #b8b8b8;border-radius:4px;background:#fff;"><div style="left:2.5px;top:-1px;font-size:13.2px;line-height:21.0px;color:#000;font-weight:normal;white-space:nowrap;letter-spacing:0.4px;">①開所(算定対象)</div><svg width="10" height="7" viewBox="0 0 10 7" style="position:absolute;right:2.8px;top:7.0px"><path d="M1.2 1.3 L5 5.2 L8.8 1.3" fill="none" stroke="#000" stroke-width="2.2" stroke-linecap="square"/></svg></div>
<div style="left:815.6px;top:617.5px;width:35.0px;height:21.0px;border:2px solid #b8b8b8;border-radius:4px;background:#fff;"><div style="left:3.8px;top:-0.8px;font-size:13px;line-height:21.0px;color:#000;font-weight:normal;white-space:nowrap;letter-spacing:0.7px;">14</div><svg width="10" height="7" viewBox="0 0 10 7" style="position:absolute;right:2.6px;top:7.0px"><path d="M1.2 1.3 L5 5.2 L8.8 1.3" fill="none" stroke="#000" stroke-width="2.2" stroke-linecap="square"/></svg></div>
<div style="left:856px;top:620.5px;font-size:13px;line-height:18px;color:#000;font-weight:normal;white-space:nowrap;">時</div>
<div style="left:870px;top:617.5px;width:35.200000000000045px;height:21.0px;border:2px solid #b8b8b8;border-radius:4px;background:#fff;"><div style="left:3.8px;top:-0.8px;font-size:13px;line-height:21.0px;color:#000;font-weight:normal;white-space:nowrap;letter-spacing:0.7px;">0</div><svg width="10" height="7" viewBox="0 0 10 7" style="position:absolute;right:2.6px;top:7.0px"><path d="M1.2 1.3 L5 5.2 L8.8 1.3" fill="none" stroke="#000" stroke-width="2.2" stroke-linecap="square"/></svg></div>
<div style="left:909.5px;top:620.5px;font-size:13px;line-height:18px;color:#000;font-weight:normal;white-space:nowrap;">分</div>
<div style="left:933.7px;top:617.5px;width:35.39999999999998px;height:21.0px;border:2px solid #b8b8b8;border-radius:4px;background:#fff;"><div style="left:3.8px;top:-0.8px;font-size:13px;line-height:21.0px;color:#000;font-weight:normal;white-space:nowrap;letter-spacing:0.7px;">19</div><svg width="10" height="7" viewBox="0 0 10 7" style="position:absolute;right:2.6px;top:7.0px"><path d="M1.2 1.3 L5 5.2 L8.8 1.3" fill="none" stroke="#000" stroke-width="2.2" stroke-linecap="square"/></svg></div>
<div style="left:974.5px;top:620.5px;font-size:13px;line-height:18px;color:#000;font-weight:normal;white-space:nowrap;">時</div>
<div style="left:987.8px;top:617.5px;width:35.40000000000009px;height:21.0px;border:2px solid #b8b8b8;border-radius:4px;background:#fff;"><div style="left:3.8px;top:-0.8px;font-size:13px;line-height:21.0px;color:#000;font-weight:normal;white-space:nowrap;letter-spacing:0.7px;">0</div><svg width="10" height="7" viewBox="0 0 10 7" style="position:absolute;right:2.6px;top:7.0px"><path d="M1.2 1.3 L5 5.2 L8.8 1.3" fill="none" stroke="#000" stroke-width="2.2" stroke-linecap="square"/></svg></div>
<div style="left:1027.8px;top:620.5px;font-size:13px;line-height:18px;color:#000;font-weight:normal;white-space:nowrap;">分</div>
<div style="left:1051.5px;top:617.5px;width:57.90000000000009px;height:21.0px;border:2px solid #b8b8b8;border-radius:4px;background:#fff;"><div style="left:4.5px;top:-1px;font-size:13.5px;line-height:21.0px;color:#000;font-weight:normal;white-space:nowrap;letter-spacing:0px;">なし</div><svg width="10" height="7" viewBox="0 0 10 7" style="position:absolute;right:2.8px;top:7.0px"><path d="M1.2 1.3 L5 5.2 L8.8 1.3" fill="none" stroke="#000" stroke-width="2.2" stroke-linecap="square"/></svg></div>
<div style="left:1146.4px;top:617.5px;width:134.69999999999982px;height:21.0px;border:2px solid #b8b8b8;border-radius:4px;background:#fff;"><div style="left:2.5px;top:-1px;font-size:13.2px;line-height:21.0px;color:#000;font-weight:normal;white-space:nowrap;letter-spacing:0.4px;">①開所(算定対象)</div><svg width="10" height="7" viewBox="0 0 10 7" style="position:absolute;right:2.8px;top:7.0px"><path d="M1.2 1.3 L5 5.2 L8.8 1.3" fill="none" stroke="#000" stroke-width="2.2" stroke-linecap="square"/></svg></div>
<div style="left:1296.0px;top:617.5px;width:35.0px;height:21.0px;border:2px solid #b8b8b8;border-radius:4px;background:#fff;"><div style="left:3.8px;top:-0.8px;font-size:13px;line-height:21.0px;color:#000;font-weight:normal;white-space:nowrap;letter-spacing:0.7px;">14</div><svg width="10" height="7" viewBox="0 0 10 7" style="position:absolute;right:2.6px;top:7.0px"><path d="M1.2 1.3 L5 5.2 L8.8 1.3" fill="none" stroke="#000" stroke-width="2.2" stroke-linecap="square"/></svg></div>
<div style="left:1336.4px;top:620.5px;font-size:13px;line-height:18px;color:#000;font-weight:normal;white-space:nowrap;">時</div>
<div style="left:1350.4px;top:617.5px;width:35.19999999999982px;height:21.0px;border:2px solid #b8b8b8;border-radius:4px;background:#fff;"><div style="left:3.8px;top:-0.8px;font-size:13px;line-height:21.0px;color:#000;font-weight:normal;white-space:nowrap;letter-spacing:0.7px;">0</div><svg width="10" height="7" viewBox="0 0 10 7" style="position:absolute;right:2.6px;top:7.0px"><path d="M1.2 1.3 L5 5.2 L8.8 1.3" fill="none" stroke="#000" stroke-width="2.2" stroke-linecap="square"/></svg></div>
<div style="left:1389.9px;top:620.5px;font-size:13px;line-height:18px;color:#000;font-weight:normal;white-space:nowrap;">分</div>
<div style="left:1414.1px;top:617.5px;width:35.40000000000009px;height:21.0px;border:2px solid #b8b8b8;border-radius:4px;background:#fff;"><div style="left:3.8px;top:-0.8px;font-size:13px;line-height:21.0px;color:#000;font-weight:normal;white-space:nowrap;letter-spacing:0.7px;">19</div><svg width="10" height="7" viewBox="0 0 10 7" style="position:absolute;right:2.6px;top:7.0px"><path d="M1.2 1.3 L5 5.2 L8.8 1.3" fill="none" stroke="#000" stroke-width="2.2" stroke-linecap="square"/></svg></div>
<div style="left:1454.9px;top:620.5px;font-size:13px;line-height:18px;color:#000;font-weight:normal;white-space:nowrap;">時</div>
<div style="left:1468.1999999999998px;top:617.5px;width:35.40000000000009px;height:21.0px;border:2px solid #b8b8b8;border-radius:4px;background:#fff;"><div style="left:3.8px;top:-0.8px;font-size:13px;line-height:21.0px;color:#000;font-weight:normal;white-space:nowrap;letter-spacing:0.7px;">0</div><svg width="10" height="7" viewBox="0 0 10 7" style="position:absolute;right:2.6px;top:7.0px"><path d="M1.2 1.3 L5 5.2 L8.8 1.3" fill="none" stroke="#000" stroke-width="2.2" stroke-linecap="square"/></svg></div>
<div style="left:1508.1999999999998px;top:620.5px;font-size:13px;line-height:18px;color:#000;font-weight:normal;white-space:nowrap;">分</div>
<div style="left:1531.9px;top:617.5px;width:57.90000000000009px;height:21.0px;border:2px solid #b8b8b8;border-radius:4px;background:#fff;"><div style="left:4.5px;top:-1px;font-size:13.5px;line-height:21.0px;color:#000;font-weight:normal;white-space:nowrap;letter-spacing:0px;">なし</div><svg width="10" height="7" viewBox="0 0 10 7" style="position:absolute;right:2.8px;top:7.0px"><path d="M1.2 1.3 L5 5.2 L8.8 1.3" fill="none" stroke="#000" stroke-width="2.2" stroke-linecap="square"/></svg></div>
<div style="left:137px;top:694px;width:1564.6px;height:1px;background:#ababab;"></div>
<div style="left:30.5px;top:695px;width:106.5px;height:1px;background:#b3e5fc;"></div>
<div style="left:36px;top:664.5px;font-size:16px;line-height:22px;color:#000;font-weight:bold;white-space:nowrap;-webkit-text-stroke:0.15px #000;letter-spacing:0.3px;">11(金)</div>
<div style="left:142.5px;top:660.5px;width:136.0px;height:21.0px;border:2px solid #b8b8b8;border-radius:4px;background:#fff;"><div style="left:5px;top:-0.5px;font-size:13px;line-height:21.0px;color:#000;font-weight:normal;white-space:nowrap;letter-spacing:0px;">平日型（通常受入）</div><svg width="10" height="7" viewBox="0 0 10 7" style="position:absolute;right:2.8px;top:7.0px"><path d="M1.2 1.3 L5 5.2 L8.8 1.3" fill="none" stroke="#000" stroke-width="2.2" stroke-linecap="square"/></svg></div>
<div style="left:294px;top:665.5px;font-size:13px;line-height:18px;color:#000;font-weight:normal;white-space:nowrap;">区分1は通常受入</div>
<svg style="left:434px;top:666.0px" width="13" height="13" viewBox="0 0 13 13"><rect x="0" y="0" width="13" height="13" rx="2" fill="#0b6fd9"/><path d="M3 6.7 L5.4 9.2 L10 3.8" stroke="#fff" stroke-width="2" fill="none"/></svg>
<div style="left:449.5px;top:665.5px;font-size:13px;line-height:18px;color:#000;font-weight:normal;white-space:nowrap;">変更する</div>
<div style="left:567.4px;top:660.5px;width:83.20000000000005px;height:21.0px;border:2px solid #b8b8b8;border-radius:4px;background:#fff;"><div style="left:4px;top:-1.5px;font-size:13.4px;line-height:21.0px;color:#000;font-weight:normal;white-space:nowrap;letter-spacing:0.55px;">16:00過ぎ</div><svg width="10" height="7" viewBox="0 0 10 7" style="position:absolute;right:2.8px;top:7.0px"><path d="M1.2 1.3 L5 5.2 L8.8 1.3" fill="none" stroke="#000" stroke-width="2.2" stroke-linecap="square"/></svg></div>
<div style="left:666px;top:660.5px;width:134.70000000000005px;height:21.0px;border:2px solid #b8b8b8;border-radius:4px;background:#fff;"><div style="left:2.5px;top:-1px;font-size:13.2px;line-height:21.0px;color:#000;font-weight:normal;white-space:nowrap;letter-spacing:0.4px;">①開所(算定対象)</div><svg width="10" height="7" viewBox="0 0 10 7" style="position:absolute;right:2.8px;top:7.0px"><path d="M1.2 1.3 L5 5.2 L8.8 1.3" fill="none" stroke="#000" stroke-width="2.2" stroke-linecap="square"/></svg></div>
<div style="left:815.6px;top:660.5px;width:35.0px;height:21.0px;border:2px solid #b8b8b8;border-radius:4px;background:#fff;"><div style="left:3.8px;top:-0.8px;font-size:13px;line-height:21.0px;color:#000;font-weight:normal;white-space:nowrap;letter-spacing:0.7px;">14</div><svg width="10" height="7" viewBox="0 0 10 7" style="position:absolute;right:2.6px;top:7.0px"><path d="M1.2 1.3 L5 5.2 L8.8 1.3" fill="none" stroke="#000" stroke-width="2.2" stroke-linecap="square"/></svg></div>
<div style="left:856px;top:663.5px;font-size:13px;line-height:18px;color:#000;font-weight:normal;white-space:nowrap;">時</div>
<div style="left:870px;top:660.5px;width:35.200000000000045px;height:21.0px;border:2px solid #b8b8b8;border-radius:4px;background:#fff;"><div style="left:3.8px;top:-0.8px;font-size:13px;line-height:21.0px;color:#000;font-weight:normal;white-space:nowrap;letter-spacing:0.7px;">0</div><svg width="10" height="7" viewBox="0 0 10 7" style="position:absolute;right:2.6px;top:7.0px"><path d="M1.2 1.3 L5 5.2 L8.8 1.3" fill="none" stroke="#000" stroke-width="2.2" stroke-linecap="square"/></svg></div>
<div style="left:909.5px;top:663.5px;font-size:13px;line-height:18px;color:#000;font-weight:normal;white-space:nowrap;">分</div>
<div style="left:933.7px;top:660.5px;width:35.39999999999998px;height:21.0px;border:2px solid #b8b8b8;border-radius:4px;background:#fff;"><div style="left:3.8px;top:-0.8px;font-size:13px;line-height:21.0px;color:#000;font-weight:normal;white-space:nowrap;letter-spacing:0.7px;">19</div><svg width="10" height="7" viewBox="0 0 10 7" style="position:absolute;right:2.6px;top:7.0px"><path d="M1.2 1.3 L5 5.2 L8.8 1.3" fill="none" stroke="#000" stroke-width="2.2" stroke-linecap="square"/></svg></div>
<div style="left:974.5px;top:663.5px;font-size:13px;line-height:18px;color:#000;font-weight:normal;white-space:nowrap;">時</div>
<div style="left:987.8px;top:660.5px;width:35.40000000000009px;height:21.0px;border:2px solid #b8b8b8;border-radius:4px;background:#fff;"><div style="left:3.8px;top:-0.8px;font-size:13px;line-height:21.0px;color:#000;font-weight:normal;white-space:nowrap;letter-spacing:0.7px;">0</div><svg width="10" height="7" viewBox="0 0 10 7" style="position:absolute;right:2.6px;top:7.0px"><path d="M1.2 1.3 L5 5.2 L8.8 1.3" fill="none" stroke="#000" stroke-width="2.2" stroke-linecap="square"/></svg></div>
<div style="left:1027.8px;top:663.5px;font-size:13px;line-height:18px;color:#000;font-weight:normal;white-space:nowrap;">分</div>
<div style="left:1051.5px;top:660.5px;width:57.90000000000009px;height:21.0px;border:2px solid #b8b8b8;border-radius:4px;background:#fff;"><div style="left:4.5px;top:-1px;font-size:13.5px;line-height:21.0px;color:#000;font-weight:normal;white-space:nowrap;letter-spacing:0px;">なし</div><svg width="10" height="7" viewBox="0 0 10 7" style="position:absolute;right:2.8px;top:7.0px"><path d="M1.2 1.3 L5 5.2 L8.8 1.3" fill="none" stroke="#000" stroke-width="2.2" stroke-linecap="square"/></svg></div>
<div style="left:1146.4px;top:660.5px;width:134.69999999999982px;height:21.0px;border:2px solid #b8b8b8;border-radius:4px;background:#fff;"><div style="left:2.5px;top:-1px;font-size:13.2px;line-height:21.0px;color:#000;font-weight:normal;white-space:nowrap;letter-spacing:0.4px;">①開所(算定対象)</div><svg width="10" height="7" viewBox="0 0 10 7" style="position:absolute;right:2.8px;top:7.0px"><path d="M1.2 1.3 L5 5.2 L8.8 1.3" fill="none" stroke="#000" stroke-width="2.2" stroke-linecap="square"/></svg></div>
<div style="left:1296.0px;top:660.5px;width:35.0px;height:21.0px;border:2px solid #b8b8b8;border-radius:4px;background:#fff;"><div style="left:3.8px;top:-0.8px;font-size:13px;line-height:21.0px;color:#000;font-weight:normal;white-space:nowrap;letter-spacing:0.7px;">14</div><svg width="10" height="7" viewBox="0 0 10 7" style="position:absolute;right:2.6px;top:7.0px"><path d="M1.2 1.3 L5 5.2 L8.8 1.3" fill="none" stroke="#000" stroke-width="2.2" stroke-linecap="square"/></svg></div>
<div style="left:1336.4px;top:663.5px;font-size:13px;line-height:18px;color:#000;font-weight:normal;white-space:nowrap;">時</div>
<div style="left:1350.4px;top:660.5px;width:35.19999999999982px;height:21.0px;border:2px solid #b8b8b8;border-radius:4px;background:#fff;"><div style="left:3.8px;top:-0.8px;font-size:13px;line-height:21.0px;color:#000;font-weight:normal;white-space:nowrap;letter-spacing:0.7px;">0</div><svg width="10" height="7" viewBox="0 0 10 7" style="position:absolute;right:2.6px;top:7.0px"><path d="M1.2 1.3 L5 5.2 L8.8 1.3" fill="none" stroke="#000" stroke-width="2.2" stroke-linecap="square"/></svg></div>
<div style="left:1389.9px;top:663.5px;font-size:13px;line-height:18px;color:#000;font-weight:normal;white-space:nowrap;">分</div>
<div style="left:1414.1px;top:660.5px;width:35.40000000000009px;height:21.0px;border:2px solid #b8b8b8;border-radius:4px;background:#fff;"><div style="left:3.8px;top:-0.8px;font-size:13px;line-height:21.0px;color:#000;font-weight:normal;white-space:nowrap;letter-spacing:0.7px;">19</div><svg width="10" height="7" viewBox="0 0 10 7" style="position:absolute;right:2.6px;top:7.0px"><path d="M1.2 1.3 L5 5.2 L8.8 1.3" fill="none" stroke="#000" stroke-width="2.2" stroke-linecap="square"/></svg></div>
<div style="left:1454.9px;top:663.5px;font-size:13px;line-height:18px;color:#000;font-weight:normal;white-space:nowrap;">時</div>
<div style="left:1468.1999999999998px;top:660.5px;width:35.40000000000009px;height:21.0px;border:2px solid #b8b8b8;border-radius:4px;background:#fff;"><div style="left:3.8px;top:-0.8px;font-size:13px;line-height:21.0px;color:#000;font-weight:normal;white-space:nowrap;letter-spacing:0.7px;">0</div><svg width="10" height="7" viewBox="0 0 10 7" style="position:absolute;right:2.6px;top:7.0px"><path d="M1.2 1.3 L5 5.2 L8.8 1.3" fill="none" stroke="#000" stroke-width="2.2" stroke-linecap="square"/></svg></div>
<div style="left:1508.1999999999998px;top:663.5px;font-size:13px;line-height:18px;color:#000;font-weight:normal;white-space:nowrap;">分</div>
<div style="left:1531.9px;top:660.5px;width:57.90000000000009px;height:21.0px;border:2px solid #b8b8b8;border-radius:4px;background:#fff;"><div style="left:4.5px;top:-1px;font-size:13.5px;line-height:21.0px;color:#000;font-weight:normal;white-space:nowrap;letter-spacing:0px;">なし</div><svg width="10" height="7" viewBox="0 0 10 7" style="position:absolute;right:2.8px;top:7.0px"><path d="M1.2 1.3 L5 5.2 L8.8 1.3" fill="none" stroke="#000" stroke-width="2.2" stroke-linecap="square"/></svg></div>
<div style="left:137px;top:695px;width:1564.6px;height:55px;background:#b3e5fc;"></div>
<div style="left:137px;top:750px;width:1564.6px;height:1px;background:#ababab;"></div>
<div style="left:30.5px;top:751px;width:106.5px;height:1px;background:#c4c4c4;"></div>
<div style="left:36px;top:714.5px;font-size:16px;line-height:22px;color:#1565c0;font-weight:bold;white-space:nowrap;-webkit-text-stroke:0.15px #1565c0;letter-spacing:0.3px;">12(土)</div>
<div style="left:142.5px;top:710.5px;width:136.0px;height:21.0px;border:2px solid #b8b8b8;border-radius:4px;background:#fff;"><div style="left:5px;top:-0.5px;font-size:13px;line-height:21.0px;color:#000;font-weight:normal;white-space:nowrap;letter-spacing:0px;">土曜型</div><svg width="10" height="7" viewBox="0 0 10 7" style="position:absolute;right:2.8px;top:7.0px"><path d="M1.2 1.3 L5 5.2 L8.8 1.3" fill="none" stroke="#000" stroke-width="2.2" stroke-linecap="square"/></svg></div>
<div style="left:294px;top:706.0px;font-size:13px;line-height:18px;color:#000;font-weight:normal;white-space:nowrap;">区分1は下記のみ受入</div>
<svg style="left:298px;top:725.5px" width="13" height="13" viewBox="0 0 13 13"><rect x="0" y="0" width="13" height="13" rx="2" fill="#0b6fd9"/><path d="M3 6.7 L5.4 9.2 L10 3.8" stroke="#fff" stroke-width="2" fill="none"/></svg>
<div style="left:314px;top:725.0px;font-size:13px;line-height:18px;color:#000;font-weight:normal;white-space:nowrap;">スポット利用</div>
<div style="left:567.4px;top:710.5px;width:83.20000000000005px;height:21.0px;border:2px solid #b8b8b8;border-radius:4px;background:#fff;"><div style="left:4px;top:-1.5px;font-size:13.4px;line-height:21.0px;color:#000;font-weight:normal;white-space:nowrap;letter-spacing:0.55px;">16:00過ぎ</div><svg width="10" height="7" viewBox="0 0 10 7" style="position:absolute;right:2.8px;top:7.0px"><path d="M1.2 1.3 L5 5.2 L8.8 1.3" fill="none" stroke="#000" stroke-width="2.2" stroke-linecap="square"/></svg></div>
<div style="left:666px;top:710.5px;width:134.70000000000005px;height:21.0px;border:2px solid #b8b8b8;border-radius:4px;background:#fff;"><div style="left:2.5px;top:-1px;font-size:13.2px;line-height:21.0px;color:#000;font-weight:normal;white-space:nowrap;letter-spacing:0.4px;">①開所(算定対象)</div><svg width="10" height="7" viewBox="0 0 10 7" style="position:absolute;right:2.8px;top:7.0px"><path d="M1.2 1.3 L5 5.2 L8.8 1.3" fill="none" stroke="#000" stroke-width="2.2" stroke-linecap="square"/></svg></div>
<div style="left:815.6px;top:710.5px;width:35.0px;height:21.0px;border:2px solid #b8b8b8;border-radius:4px;background:#fff;"><div style="left:3.8px;top:-0.8px;font-size:13px;line-height:21.0px;color:#000;font-weight:normal;white-space:nowrap;letter-spacing:0.7px;">8</div><svg width="10" height="7" viewBox="0 0 10 7" style="position:absolute;right:2.6px;top:7.0px"><path d="M1.2 1.3 L5 5.2 L8.8 1.3" fill="none" stroke="#000" stroke-width="2.2" stroke-linecap="square"/></svg></div>
<div style="left:856px;top:713.5px;font-size:13px;line-height:18px;color:#000;font-weight:normal;white-space:nowrap;">時</div>
<div style="left:870px;top:710.5px;width:35.200000000000045px;height:21.0px;border:2px solid #b8b8b8;border-radius:4px;background:#fff;"><div style="left:3.8px;top:-0.8px;font-size:13px;line-height:21.0px;color:#000;font-weight:normal;white-space:nowrap;letter-spacing:0.7px;">30</div><svg width="10" height="7" viewBox="0 0 10 7" style="position:absolute;right:2.6px;top:7.0px"><path d="M1.2 1.3 L5 5.2 L8.8 1.3" fill="none" stroke="#000" stroke-width="2.2" stroke-linecap="square"/></svg></div>
<div style="left:909.5px;top:713.5px;font-size:13px;line-height:18px;color:#000;font-weight:normal;white-space:nowrap;">分</div>
<div style="left:933.7px;top:710.5px;width:35.39999999999998px;height:21.0px;border:2px solid #b8b8b8;border-radius:4px;background:#fff;"><div style="left:3.8px;top:-0.8px;font-size:13px;line-height:21.0px;color:#000;font-weight:normal;white-space:nowrap;letter-spacing:0.7px;">19</div><svg width="10" height="7" viewBox="0 0 10 7" style="position:absolute;right:2.6px;top:7.0px"><path d="M1.2 1.3 L5 5.2 L8.8 1.3" fill="none" stroke="#000" stroke-width="2.2" stroke-linecap="square"/></svg></div>
<div style="left:974.5px;top:713.5px;font-size:13px;line-height:18px;color:#000;font-weight:normal;white-space:nowrap;">時</div>
<div style="left:987.8px;top:710.5px;width:35.40000000000009px;height:21.0px;border:2px solid #b8b8b8;border-radius:4px;background:#fff;"><div style="left:3.8px;top:-0.8px;font-size:13px;line-height:21.0px;color:#000;font-weight:normal;white-space:nowrap;letter-spacing:0.7px;">0</div><svg width="10" height="7" viewBox="0 0 10 7" style="position:absolute;right:2.6px;top:7.0px"><path d="M1.2 1.3 L5 5.2 L8.8 1.3" fill="none" stroke="#000" stroke-width="2.2" stroke-linecap="square"/></svg></div>
<div style="left:1027.8px;top:713.5px;font-size:13px;line-height:18px;color:#000;font-weight:normal;white-space:nowrap;">分</div>
<div style="left:1051.5px;top:710.5px;width:57.90000000000009px;height:21.0px;border:2px solid #b8b8b8;border-radius:4px;background:#fff;"><div style="left:4.5px;top:-1px;font-size:13.5px;line-height:21.0px;color:#000;font-weight:normal;white-space:nowrap;letter-spacing:0px;">なし</div><svg width="10" height="7" viewBox="0 0 10 7" style="position:absolute;right:2.8px;top:7.0px"><path d="M1.2 1.3 L5 5.2 L8.8 1.3" fill="none" stroke="#000" stroke-width="2.2" stroke-linecap="square"/></svg></div>
<div style="left:1146.4px;top:710.5px;width:134.69999999999982px;height:21.0px;border:2px solid #b8b8b8;border-radius:4px;background:#fff;"><div style="left:2.5px;top:-1px;font-size:13.2px;line-height:21.0px;color:#000;font-weight:normal;white-space:nowrap;letter-spacing:0.4px;">①開所(算定対象)</div><svg width="10" height="7" viewBox="0 0 10 7" style="position:absolute;right:2.8px;top:7.0px"><path d="M1.2 1.3 L5 5.2 L8.8 1.3" fill="none" stroke="#000" stroke-width="2.2" stroke-linecap="square"/></svg></div>
<div style="left:1296.0px;top:710.5px;width:35.0px;height:21.0px;border:2px solid #b8b8b8;border-radius:4px;background:#fff;"><div style="left:3.8px;top:-0.8px;font-size:13px;line-height:21.0px;color:#000;font-weight:normal;white-space:nowrap;letter-spacing:0.7px;">8</div><svg width="10" height="7" viewBox="0 0 10 7" style="position:absolute;right:2.6px;top:7.0px"><path d="M1.2 1.3 L5 5.2 L8.8 1.3" fill="none" stroke="#000" stroke-width="2.2" stroke-linecap="square"/></svg></div>
<div style="left:1336.4px;top:713.5px;font-size:13px;line-height:18px;color:#000;font-weight:normal;white-space:nowrap;">時</div>
<div style="left:1350.4px;top:710.5px;width:35.19999999999982px;height:21.0px;border:2px solid #b8b8b8;border-radius:4px;background:#fff;"><div style="left:3.8px;top:-0.8px;font-size:13px;line-height:21.0px;color:#000;font-weight:normal;white-space:nowrap;letter-spacing:0.7px;">30</div><svg width="10" height="7" viewBox="0 0 10 7" style="position:absolute;right:2.6px;top:7.0px"><path d="M1.2 1.3 L5 5.2 L8.8 1.3" fill="none" stroke="#000" stroke-width="2.2" stroke-linecap="square"/></svg></div>
<div style="left:1389.9px;top:713.5px;font-size:13px;line-height:18px;color:#000;font-weight:normal;white-space:nowrap;">分</div>
<div style="left:1414.1px;top:710.5px;width:35.40000000000009px;height:21.0px;border:2px solid #b8b8b8;border-radius:4px;background:#fff;"><div style="left:3.8px;top:-0.8px;font-size:13px;line-height:21.0px;color:#000;font-weight:normal;white-space:nowrap;letter-spacing:0.7px;">19</div><svg width="10" height="7" viewBox="0 0 10 7" style="position:absolute;right:2.6px;top:7.0px"><path d="M1.2 1.3 L5 5.2 L8.8 1.3" fill="none" stroke="#000" stroke-width="2.2" stroke-linecap="square"/></svg></div>
<div style="left:1454.9px;top:713.5px;font-size:13px;line-height:18px;color:#000;font-weight:normal;white-space:nowrap;">時</div>
<div style="left:1468.1999999999998px;top:710.5px;width:35.40000000000009px;height:21.0px;border:2px solid #b8b8b8;border-radius:4px;background:#fff;"><div style="left:3.8px;top:-0.8px;font-size:13px;line-height:21.0px;color:#000;font-weight:normal;white-space:nowrap;letter-spacing:0.7px;">0</div><svg width="10" height="7" viewBox="0 0 10 7" style="position:absolute;right:2.6px;top:7.0px"><path d="M1.2 1.3 L5 5.2 L8.8 1.3" fill="none" stroke="#000" stroke-width="2.2" stroke-linecap="square"/></svg></div>
<div style="left:1508.1999999999998px;top:713.5px;font-size:13px;line-height:18px;color:#000;font-weight:normal;white-space:nowrap;">分</div>
<div style="left:1531.9px;top:710.5px;width:57.90000000000009px;height:21.0px;border:2px solid #b8b8b8;border-radius:4px;background:#fff;"><div style="left:4.5px;top:-1px;font-size:13.5px;line-height:21.0px;color:#000;font-weight:normal;white-space:nowrap;letter-spacing:0px;">なし</div><svg width="10" height="7" viewBox="0 0 10 7" style="position:absolute;right:2.8px;top:7.0px"><path d="M1.2 1.3 L5 5.2 L8.8 1.3" fill="none" stroke="#000" stroke-width="2.2" stroke-linecap="square"/></svg></div>
<div style="left:137px;top:751px;width:1564.6px;height:42px;background:#cccccc;"></div>
<div style="left:137px;top:793px;width:1564.6px;height:2px;background:#959595;"></div>
<div style="left:30.5px;top:794px;width:106.5px;height:1px;background:#959595;"></div>
<div style="left:36px;top:763.5px;font-size:16px;line-height:22px;color:#e91e63;font-weight:bold;white-space:nowrap;-webkit-text-stroke:0.15px #e91e63;letter-spacing:0.3px;">13(日)</div>
<div style="left:142.5px;top:759.5px;width:136.0px;height:21.0px;border:2px solid #b8b8b8;border-radius:4px;background:#fff;"><div style="left:5px;top:-0.5px;font-size:13px;line-height:21.0px;color:#000;font-weight:normal;white-space:nowrap;letter-spacing:0px;">閉所</div><svg width="10" height="7" viewBox="0 0 10 7" style="position:absolute;right:2.8px;top:7.0px"><path d="M1.2 1.3 L5 5.2 L8.8 1.3" fill="none" stroke="#000" stroke-width="2.2" stroke-linecap="square"/></svg></div>
<div style="left:136.0px;top:208px;width:1px;height:595px;background:repeating-linear-gradient(to bottom,#acacac 0,#acacac 2.5px,transparent 2.5px,transparent 5px);"></div>
<div style="left:288.0px;top:208px;width:1px;height:595px;background:repeating-linear-gradient(to bottom,#acacac 0,#acacac 2.5px,transparent 2.5px,transparent 5px);"></div>
<div style="left:424.0px;top:208px;width:1px;height:595px;background:repeating-linear-gradient(to bottom,#acacac 0,#acacac 2.5px,transparent 2.5px,transparent 5px);"></div>
<div style="left:560.8px;top:208px;width:1px;height:595px;background:repeating-linear-gradient(to bottom,#acacac 0,#acacac 2.5px,transparent 2.5px,transparent 5px);"></div>
<div style="left:659.8px;top:208px;width:1px;height:595px;background:repeating-linear-gradient(to bottom,#acacac 0,#acacac 2.5px,transparent 2.5px,transparent 5px);"></div>
<div style="left:1140.1px;top:208px;width:1px;height:595px;background:repeating-linear-gradient(to bottom,#acacac 0,#acacac 2.5px,transparent 2.5px,transparent 5px);"></div>
<div style="left:1620.9px;top:208px;width:1px;height:595px;background:repeating-linear-gradient(to bottom,#acacac 0,#acacac 2.5px,transparent 2.5px,transparent 5px);"></div>
<div style="left:1725.5px;top:104px;width:14.5px;height:699px;background:#f8f8f8;"></div>
<svg style="left:1727px;top:108px" width="11" height="9" viewBox="0 0 11 9"><path d="M5.5 0.5 L10.5 8 H0.5 Z" fill="#8a8a8a"/></svg>
<div style="left:1728px;top:121.5px;width:9px;height:258px;background:#8a8a8a;border-radius:4.5px;"></div>
<svg style="left:1727px;top:791.5px" width="11" height="9" viewBox="0 0 11 9"><path d="M0.5 1 H10.5 L5.5 8.5 Z" fill="#8a8a8a"/></svg>
<div style="left:10px;top:803px;width:1730px;height:15px;background:#f8f8f8;border-radius:0 0 8px 8px;"></div>
<svg style="left:13px;top:805.5px" width="10" height="11" viewBox="0 0 10 11"><path d="M1 5.5 L9 0.5 V10.5 Z" fill="#8a8a8a"/></svg>
<svg style="left:1712px;top:805.5px" width="10" height="11" viewBox="0 0 10 11"><path d="M9 5.5 L1 0.5 V10.5 Z" fill="#8a8a8a"/></svg>
<div style="left:98px;top:157px;width:41px;height:173.5px;background:#fff;border:1px solid #767676;"></div>
<div style="left:99px;top:187px;width:41px;height:29px;background:#1a64d4;"></div>
<div style="left:107.5px;top:163.5px;font-size:14px;line-height:18px;color:#000;font-weight:normal;white-space:nowrap;">1</div>
<div style="left:107.5px;top:192.5px;font-size:14px;line-height:18px;color:#fff;font-weight:normal;white-space:nowrap;">2</div>
<div style="left:107.5px;top:221.5px;font-size:14px;line-height:18px;color:#000;font-weight:normal;white-space:nowrap;">3</div>
<div style="left:107.5px;top:250.5px;font-size:14px;line-height:18px;color:#000;font-weight:normal;white-space:nowrap;">4</div>
<div style="left:107.5px;top:279.5px;font-size:14px;line-height:18px;color:#000;font-weight:normal;white-space:nowrap;">5</div>
<div style="left:107.5px;top:308.5px;font-size:14px;line-height:18px;color:#000;font-weight:normal;white-space:nowrap;">6</div>
<div style="left:88px;top:116px;width:53px;height:216px;border:5px solid #ec1c24;"></div>
<div style="left:656px;top:158px;width:960px;height:45.5px;border:5px solid #ec1c24;"></div>
</body></html>
